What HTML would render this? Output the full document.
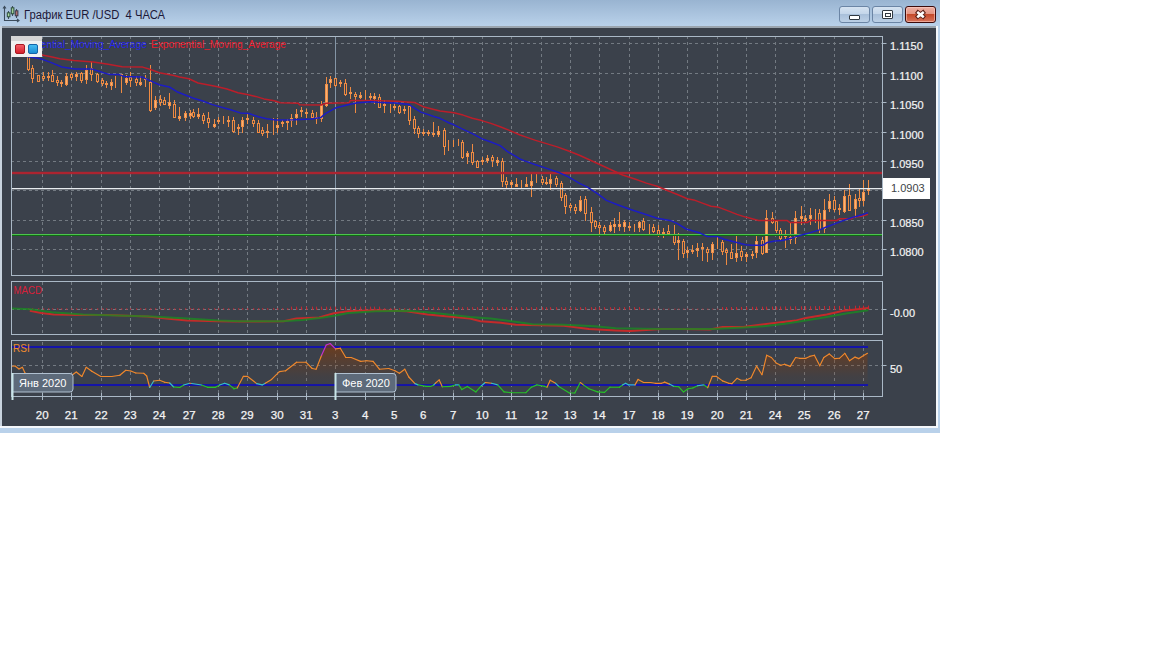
<!DOCTYPE html>
<html><head><meta charset="utf-8"><style>
html,body{margin:0;padding:0;background:#fff;width:1152px;height:648px;overflow:hidden;font-family:"Liberation Sans",sans-serif}
#win{position:absolute;left:0;top:0;width:940px;height:433px;background:#b9d1ea}
#tb{position:absolute;left:0;top:0;width:940px;height:26px;background:linear-gradient(#99b4d1,#b9d1ea)}
#dark{position:absolute;left:2px;top:26px;width:934px;height:400px;background:linear-gradient(#3b414b,#3b414b) 0 2px/100% 100% no-repeat,linear-gradient(#9aa4ae,#5a626a)}
#lb{position:absolute;left:0;top:26px;width:2px;height:402px;background:#c9d3de}
#bb{position:absolute;left:0;top:426px;width:938px;height:2px;background:#f4f7fb}
#rb{position:absolute;left:936px;top:26px;width:2px;height:402px;background:#f4f7fb}
#title{position:absolute;left:23.5px;top:8px;font-size:12.3px;color:#1c1838;white-space:pre;transform:scaleX(0.915);transform-origin:0 0}
.btn{position:absolute;top:6px;height:17px;border-radius:3px;box-sizing:border-box}
svg{position:absolute;left:0;top:0}
</style></head><body>
<div id="win"><div id="tb"></div><div id="lb"></div><div id="rb"></div><div id="bb"></div><div id="dark"></div>
<svg width="24" height="26" style="position:absolute;left:0;top:0" viewBox="0 0 24 26"><g stroke="#3c4c5c" fill="none" stroke-width="1.1"><path d="M4.5 7 V20.5 H18.5"/><path d="M3 8.5 L4.5 6.5 L6 8.5"/><path d="M17 19 L19 20.5 L17 22"/><path d="M8.5 11 V19 M12.5 6 V16 M16.5 9 V18"/></g><rect x="7.3" y="12.8" width="2.6" height="4" fill="#a8d8a0" stroke="#2c4c3c" stroke-width="1"/><rect x="11.3" y="7.8" width="2.6" height="6" fill="#a0d098" stroke="#2c4c3c" stroke-width="1"/><rect x="15.3" y="10.8" width="2.6" height="5" fill="#b07070" stroke="#3c3c4c" stroke-width="1"/></svg>
<div id="title">График EUR /USD  4 ЧАСА</div>
<div class="btn" style="left:839px;width:31px;border:1px solid #6b85a5;background:linear-gradient(#d6e3f1 0%,#c4d6ea 45%,#a9c0da 50%,#bcd0e6 100%)"><div style="position:absolute;left:9px;top:8px;width:9px;height:3px;border:1px solid #303840;background:#fff;border-radius:1px"></div></div>
<div class="btn" style="left:872px;width:31px;border:1px solid #6b85a5;background:linear-gradient(#d6e3f1 0%,#c4d6ea 45%,#a9c0da 50%,#bcd0e6 100%)"><div style="position:absolute;left:9px;top:3px;width:9px;height:7px;border:1px solid #303840;background:#fff;border-radius:1px"><div style="position:absolute;left:2px;top:2px;width:4px;height:2px;border:1px solid #303840"></div></div></div>
<div class="btn" style="left:905px;width:31px;border:1px solid #3c0a0a;background:linear-gradient(#eeb0a4 0%,#e49482 45%,#c4492a 50%,#d8745c 100%);box-shadow:inset 0 0 0 1px rgba(255,210,200,0.55)"><svg width="29" height="15" style="position:absolute;left:0;top:0" viewBox="0 0 29 15"><path d="M10.3 4.3 L18.7 10.9 M18.7 4.3 L10.3 10.9" stroke="#5a2018" stroke-width="4.3"/><path d="M11.2 5 L17.8 10.2 M17.8 5 L11.2 10.2" stroke="#ffffff" stroke-width="2.6"/></svg></div>
<svg width="1152" height="648" viewBox="0 0 1152 648" font-family="Liberation Sans, sans-serif">
<line x1="42.5" y1="37.0" x2="42.5" y2="275.5" stroke="#737a82" stroke-dasharray="3 3" stroke-dashoffset="1"/>
<line x1="42.5" y1="282.0" x2="42.5" y2="334.5" stroke="#737a82" stroke-dasharray="3 3" stroke-dashoffset="0"/>
<line x1="42.5" y1="341.0" x2="42.5" y2="396.5" stroke="#737a82" stroke-dasharray="3 3" stroke-dashoffset="5"/>
<line x1="71.5" y1="37.0" x2="71.5" y2="275.5" stroke="#737a82" stroke-dasharray="3 3" stroke-dashoffset="1"/>
<line x1="71.5" y1="282.0" x2="71.5" y2="334.5" stroke="#737a82" stroke-dasharray="3 3" stroke-dashoffset="0"/>
<line x1="71.5" y1="341.0" x2="71.5" y2="396.5" stroke="#737a82" stroke-dasharray="3 3" stroke-dashoffset="5"/>
<line x1="101.5" y1="37.0" x2="101.5" y2="275.5" stroke="#737a82" stroke-dasharray="3 3" stroke-dashoffset="1"/>
<line x1="101.5" y1="282.0" x2="101.5" y2="334.5" stroke="#737a82" stroke-dasharray="3 3" stroke-dashoffset="0"/>
<line x1="101.5" y1="341.0" x2="101.5" y2="396.5" stroke="#737a82" stroke-dasharray="3 3" stroke-dashoffset="5"/>
<line x1="130.5" y1="37.0" x2="130.5" y2="275.5" stroke="#737a82" stroke-dasharray="3 3" stroke-dashoffset="1"/>
<line x1="130.5" y1="282.0" x2="130.5" y2="334.5" stroke="#737a82" stroke-dasharray="3 3" stroke-dashoffset="0"/>
<line x1="130.5" y1="341.0" x2="130.5" y2="396.5" stroke="#737a82" stroke-dasharray="3 3" stroke-dashoffset="5"/>
<line x1="159.5" y1="37.0" x2="159.5" y2="275.5" stroke="#737a82" stroke-dasharray="3 3" stroke-dashoffset="1"/>
<line x1="159.5" y1="282.0" x2="159.5" y2="334.5" stroke="#737a82" stroke-dasharray="3 3" stroke-dashoffset="0"/>
<line x1="159.5" y1="341.0" x2="159.5" y2="396.5" stroke="#737a82" stroke-dasharray="3 3" stroke-dashoffset="5"/>
<line x1="189.5" y1="37.0" x2="189.5" y2="275.5" stroke="#737a82" stroke-dasharray="3 3" stroke-dashoffset="1"/>
<line x1="189.5" y1="282.0" x2="189.5" y2="334.5" stroke="#737a82" stroke-dasharray="3 3" stroke-dashoffset="0"/>
<line x1="189.5" y1="341.0" x2="189.5" y2="396.5" stroke="#737a82" stroke-dasharray="3 3" stroke-dashoffset="5"/>
<line x1="218.5" y1="37.0" x2="218.5" y2="275.5" stroke="#737a82" stroke-dasharray="3 3" stroke-dashoffset="1"/>
<line x1="218.5" y1="282.0" x2="218.5" y2="334.5" stroke="#737a82" stroke-dasharray="3 3" stroke-dashoffset="0"/>
<line x1="218.5" y1="341.0" x2="218.5" y2="396.5" stroke="#737a82" stroke-dasharray="3 3" stroke-dashoffset="5"/>
<line x1="247.5" y1="37.0" x2="247.5" y2="275.5" stroke="#737a82" stroke-dasharray="3 3" stroke-dashoffset="1"/>
<line x1="247.5" y1="282.0" x2="247.5" y2="334.5" stroke="#737a82" stroke-dasharray="3 3" stroke-dashoffset="0"/>
<line x1="247.5" y1="341.0" x2="247.5" y2="396.5" stroke="#737a82" stroke-dasharray="3 3" stroke-dashoffset="5"/>
<line x1="277.5" y1="37.0" x2="277.5" y2="275.5" stroke="#737a82" stroke-dasharray="3 3" stroke-dashoffset="1"/>
<line x1="277.5" y1="282.0" x2="277.5" y2="334.5" stroke="#737a82" stroke-dasharray="3 3" stroke-dashoffset="0"/>
<line x1="277.5" y1="341.0" x2="277.5" y2="396.5" stroke="#737a82" stroke-dasharray="3 3" stroke-dashoffset="5"/>
<line x1="306.5" y1="37.0" x2="306.5" y2="275.5" stroke="#737a82" stroke-dasharray="3 3" stroke-dashoffset="1"/>
<line x1="306.5" y1="282.0" x2="306.5" y2="334.5" stroke="#737a82" stroke-dasharray="3 3" stroke-dashoffset="0"/>
<line x1="306.5" y1="341.0" x2="306.5" y2="396.5" stroke="#737a82" stroke-dasharray="3 3" stroke-dashoffset="5"/>
<line x1="335.5" y1="37.0" x2="335.5" y2="275.5" stroke="#737a82" stroke-dasharray="3 3" stroke-dashoffset="1"/>
<line x1="335.5" y1="282.0" x2="335.5" y2="334.5" stroke="#737a82" stroke-dasharray="3 3" stroke-dashoffset="0"/>
<line x1="335.5" y1="341.0" x2="335.5" y2="396.5" stroke="#737a82" stroke-dasharray="3 3" stroke-dashoffset="5"/>
<line x1="365.5" y1="37.0" x2="365.5" y2="275.5" stroke="#737a82" stroke-dasharray="3 3" stroke-dashoffset="1"/>
<line x1="365.5" y1="282.0" x2="365.5" y2="334.5" stroke="#737a82" stroke-dasharray="3 3" stroke-dashoffset="0"/>
<line x1="365.5" y1="341.0" x2="365.5" y2="396.5" stroke="#737a82" stroke-dasharray="3 3" stroke-dashoffset="5"/>
<line x1="394.5" y1="37.0" x2="394.5" y2="275.5" stroke="#737a82" stroke-dasharray="3 3" stroke-dashoffset="1"/>
<line x1="394.5" y1="282.0" x2="394.5" y2="334.5" stroke="#737a82" stroke-dasharray="3 3" stroke-dashoffset="0"/>
<line x1="394.5" y1="341.0" x2="394.5" y2="396.5" stroke="#737a82" stroke-dasharray="3 3" stroke-dashoffset="5"/>
<line x1="423.5" y1="37.0" x2="423.5" y2="275.5" stroke="#737a82" stroke-dasharray="3 3" stroke-dashoffset="1"/>
<line x1="423.5" y1="282.0" x2="423.5" y2="334.5" stroke="#737a82" stroke-dasharray="3 3" stroke-dashoffset="0"/>
<line x1="423.5" y1="341.0" x2="423.5" y2="396.5" stroke="#737a82" stroke-dasharray="3 3" stroke-dashoffset="5"/>
<line x1="453.5" y1="37.0" x2="453.5" y2="275.5" stroke="#737a82" stroke-dasharray="3 3" stroke-dashoffset="1"/>
<line x1="453.5" y1="282.0" x2="453.5" y2="334.5" stroke="#737a82" stroke-dasharray="3 3" stroke-dashoffset="0"/>
<line x1="453.5" y1="341.0" x2="453.5" y2="396.5" stroke="#737a82" stroke-dasharray="3 3" stroke-dashoffset="5"/>
<line x1="482.5" y1="37.0" x2="482.5" y2="275.5" stroke="#737a82" stroke-dasharray="3 3" stroke-dashoffset="1"/>
<line x1="482.5" y1="282.0" x2="482.5" y2="334.5" stroke="#737a82" stroke-dasharray="3 3" stroke-dashoffset="0"/>
<line x1="482.5" y1="341.0" x2="482.5" y2="396.5" stroke="#737a82" stroke-dasharray="3 3" stroke-dashoffset="5"/>
<line x1="511.5" y1="37.0" x2="511.5" y2="275.5" stroke="#737a82" stroke-dasharray="3 3" stroke-dashoffset="1"/>
<line x1="511.5" y1="282.0" x2="511.5" y2="334.5" stroke="#737a82" stroke-dasharray="3 3" stroke-dashoffset="0"/>
<line x1="511.5" y1="341.0" x2="511.5" y2="396.5" stroke="#737a82" stroke-dasharray="3 3" stroke-dashoffset="5"/>
<line x1="541.5" y1="37.0" x2="541.5" y2="275.5" stroke="#737a82" stroke-dasharray="3 3" stroke-dashoffset="1"/>
<line x1="541.5" y1="282.0" x2="541.5" y2="334.5" stroke="#737a82" stroke-dasharray="3 3" stroke-dashoffset="0"/>
<line x1="541.5" y1="341.0" x2="541.5" y2="396.5" stroke="#737a82" stroke-dasharray="3 3" stroke-dashoffset="5"/>
<line x1="570.5" y1="37.0" x2="570.5" y2="275.5" stroke="#737a82" stroke-dasharray="3 3" stroke-dashoffset="1"/>
<line x1="570.5" y1="282.0" x2="570.5" y2="334.5" stroke="#737a82" stroke-dasharray="3 3" stroke-dashoffset="0"/>
<line x1="570.5" y1="341.0" x2="570.5" y2="396.5" stroke="#737a82" stroke-dasharray="3 3" stroke-dashoffset="5"/>
<line x1="599.5" y1="37.0" x2="599.5" y2="275.5" stroke="#737a82" stroke-dasharray="3 3" stroke-dashoffset="1"/>
<line x1="599.5" y1="282.0" x2="599.5" y2="334.5" stroke="#737a82" stroke-dasharray="3 3" stroke-dashoffset="0"/>
<line x1="599.5" y1="341.0" x2="599.5" y2="396.5" stroke="#737a82" stroke-dasharray="3 3" stroke-dashoffset="5"/>
<line x1="629.5" y1="37.0" x2="629.5" y2="275.5" stroke="#737a82" stroke-dasharray="3 3" stroke-dashoffset="1"/>
<line x1="629.5" y1="282.0" x2="629.5" y2="334.5" stroke="#737a82" stroke-dasharray="3 3" stroke-dashoffset="0"/>
<line x1="629.5" y1="341.0" x2="629.5" y2="396.5" stroke="#737a82" stroke-dasharray="3 3" stroke-dashoffset="5"/>
<line x1="658.5" y1="37.0" x2="658.5" y2="275.5" stroke="#737a82" stroke-dasharray="3 3" stroke-dashoffset="1"/>
<line x1="658.5" y1="282.0" x2="658.5" y2="334.5" stroke="#737a82" stroke-dasharray="3 3" stroke-dashoffset="0"/>
<line x1="658.5" y1="341.0" x2="658.5" y2="396.5" stroke="#737a82" stroke-dasharray="3 3" stroke-dashoffset="5"/>
<line x1="687.5" y1="37.0" x2="687.5" y2="275.5" stroke="#737a82" stroke-dasharray="3 3" stroke-dashoffset="1"/>
<line x1="687.5" y1="282.0" x2="687.5" y2="334.5" stroke="#737a82" stroke-dasharray="3 3" stroke-dashoffset="0"/>
<line x1="687.5" y1="341.0" x2="687.5" y2="396.5" stroke="#737a82" stroke-dasharray="3 3" stroke-dashoffset="5"/>
<line x1="717.5" y1="37.0" x2="717.5" y2="275.5" stroke="#737a82" stroke-dasharray="3 3" stroke-dashoffset="1"/>
<line x1="717.5" y1="282.0" x2="717.5" y2="334.5" stroke="#737a82" stroke-dasharray="3 3" stroke-dashoffset="0"/>
<line x1="717.5" y1="341.0" x2="717.5" y2="396.5" stroke="#737a82" stroke-dasharray="3 3" stroke-dashoffset="5"/>
<line x1="746.5" y1="37.0" x2="746.5" y2="275.5" stroke="#737a82" stroke-dasharray="3 3" stroke-dashoffset="1"/>
<line x1="746.5" y1="282.0" x2="746.5" y2="334.5" stroke="#737a82" stroke-dasharray="3 3" stroke-dashoffset="0"/>
<line x1="746.5" y1="341.0" x2="746.5" y2="396.5" stroke="#737a82" stroke-dasharray="3 3" stroke-dashoffset="5"/>
<line x1="775.5" y1="37.0" x2="775.5" y2="275.5" stroke="#737a82" stroke-dasharray="3 3" stroke-dashoffset="1"/>
<line x1="775.5" y1="282.0" x2="775.5" y2="334.5" stroke="#737a82" stroke-dasharray="3 3" stroke-dashoffset="0"/>
<line x1="775.5" y1="341.0" x2="775.5" y2="396.5" stroke="#737a82" stroke-dasharray="3 3" stroke-dashoffset="5"/>
<line x1="804.5" y1="37.0" x2="804.5" y2="275.5" stroke="#737a82" stroke-dasharray="3 3" stroke-dashoffset="1"/>
<line x1="804.5" y1="282.0" x2="804.5" y2="334.5" stroke="#737a82" stroke-dasharray="3 3" stroke-dashoffset="0"/>
<line x1="804.5" y1="341.0" x2="804.5" y2="396.5" stroke="#737a82" stroke-dasharray="3 3" stroke-dashoffset="5"/>
<line x1="834.5" y1="37.0" x2="834.5" y2="275.5" stroke="#737a82" stroke-dasharray="3 3" stroke-dashoffset="1"/>
<line x1="834.5" y1="282.0" x2="834.5" y2="334.5" stroke="#737a82" stroke-dasharray="3 3" stroke-dashoffset="0"/>
<line x1="834.5" y1="341.0" x2="834.5" y2="396.5" stroke="#737a82" stroke-dasharray="3 3" stroke-dashoffset="5"/>
<line x1="863.5" y1="37.0" x2="863.5" y2="275.5" stroke="#737a82" stroke-dasharray="3 3" stroke-dashoffset="1"/>
<line x1="863.5" y1="282.0" x2="863.5" y2="334.5" stroke="#737a82" stroke-dasharray="3 3" stroke-dashoffset="0"/>
<line x1="863.5" y1="341.0" x2="863.5" y2="396.5" stroke="#737a82" stroke-dasharray="3 3" stroke-dashoffset="5"/>
<line x1="12" y1="43.5" x2="882.5" y2="43.5" stroke="#737a82" stroke-dasharray="3 3" stroke-dashoffset="1"/>
<line x1="882.5" y1="43.5" x2="886.5" y2="43.5" stroke="#aab8c6"/>
<line x1="12" y1="73.5" x2="882.5" y2="73.5" stroke="#737a82" stroke-dasharray="3 3" stroke-dashoffset="1"/>
<line x1="882.5" y1="73.5" x2="886.5" y2="73.5" stroke="#aab8c6"/>
<line x1="12" y1="102.5" x2="882.5" y2="102.5" stroke="#737a82" stroke-dasharray="3 3" stroke-dashoffset="1"/>
<line x1="882.5" y1="102.5" x2="886.5" y2="102.5" stroke="#aab8c6"/>
<line x1="12" y1="132.5" x2="882.5" y2="132.5" stroke="#737a82" stroke-dasharray="3 3" stroke-dashoffset="1"/>
<line x1="882.5" y1="132.5" x2="886.5" y2="132.5" stroke="#aab8c6"/>
<line x1="12" y1="161.5" x2="882.5" y2="161.5" stroke="#737a82" stroke-dasharray="3 3" stroke-dashoffset="1"/>
<line x1="882.5" y1="161.5" x2="886.5" y2="161.5" stroke="#aab8c6"/>
<line x1="12" y1="190.5" x2="882.5" y2="190.5" stroke="#737a82" stroke-dasharray="3 3" stroke-dashoffset="1"/>
<line x1="882.5" y1="190.5" x2="886.5" y2="190.5" stroke="#aab8c6"/>
<line x1="12" y1="220.5" x2="882.5" y2="220.5" stroke="#737a82" stroke-dasharray="3 3" stroke-dashoffset="1"/>
<line x1="882.5" y1="220.5" x2="886.5" y2="220.5" stroke="#aab8c6"/>
<line x1="12" y1="249.5" x2="882.5" y2="249.5" stroke="#737a82" stroke-dasharray="3 3" stroke-dashoffset="1"/>
<line x1="882.5" y1="249.5" x2="886.5" y2="249.5" stroke="#aab8c6"/>
<line x1="12" y1="309.5" x2="882.5" y2="309.5" stroke="#737a82" stroke-dasharray="3 3" stroke-dashoffset="1"/>
<line x1="882.5" y1="309.5" x2="886.5" y2="309.5" stroke="#aab8c6"/>
<line x1="12" y1="365.5" x2="882.5" y2="365.5" stroke="#737a82" stroke-dasharray="3 3" stroke-dashoffset="1"/>
<line x1="882.5" y1="365.5" x2="886.5" y2="365.5" stroke="#aab8c6"/>
<line x1="335.5" y1="37" x2="335.5" y2="340" stroke="#8495a6"/>
<line x1="13.5" y1="40" x2="13.5" y2="53" stroke="#ee8a42"/>
<rect x="12.5" y="42.5" width="2" height="8" fill="#3b414b" stroke="#ee8a42"/>
<line x1="18.5" y1="38" x2="18.5" y2="51" stroke="#ee8a42"/>
<rect x="17.5" y="40.5" width="2" height="8" fill="#fab272" stroke="#f0904a"/>
<line x1="23.5" y1="40" x2="23.5" y2="56" stroke="#ee8a42"/>
<rect x="22.5" y="43.5" width="2" height="9" fill="#3b414b" stroke="#ee8a42"/>
<line x1="28.5" y1="40" x2="28.5" y2="71" stroke="#ee8a42"/>
<rect x="27.5" y="45.5" width="2" height="24" fill="#3b414b" stroke="#ee8a42"/>
<line x1="32.5" y1="65" x2="32.5" y2="83" stroke="#ee8a42"/>
<rect x="31.5" y="68.5" width="2" height="10" fill="#3b414b" stroke="#ee8a42"/>
<line x1="38.5" y1="75" x2="38.5" y2="82" stroke="#ee8a42"/>
<rect x="37.5" y="75.5" width="2" height="6" fill="#3b414b" stroke="#ee8a42"/>
<line x1="43.5" y1="72" x2="43.5" y2="81" stroke="#ee8a42"/>
<rect x="42.5" y="76.5" width="2" height="2" fill="#3b414b" stroke="#ee8a42"/>
<line x1="48.5" y1="72" x2="48.5" y2="81" stroke="#ee8a42"/>
<rect x="47.5" y="76.5" width="2" height="1" fill="#fab272" stroke="#f0904a"/>
<line x1="52.5" y1="70" x2="52.5" y2="82" stroke="#ee8a42"/>
<rect x="51.5" y="75.5" width="2" height="6" fill="#3b414b" stroke="#ee8a42"/>
<line x1="57.5" y1="76" x2="57.5" y2="86" stroke="#ee8a42"/>
<rect x="56.5" y="80.5" width="2" height="2" fill="#3b414b" stroke="#ee8a42"/>
<line x1="61.5" y1="80" x2="61.5" y2="87" stroke="#ee8a42"/>
<rect x="60.5" y="82.5" width="2" height="1" fill="#fab272" stroke="#f0904a"/>
<line x1="66.5" y1="73" x2="66.5" y2="86" stroke="#ee8a42"/>
<rect x="65.5" y="76.5" width="2" height="8" fill="#fab272" stroke="#f0904a"/>
<line x1="71.5" y1="73" x2="71.5" y2="80" stroke="#ee8a42"/>
<rect x="70.5" y="74.5" width="2" height="3" fill="#3b414b" stroke="#ee8a42"/>
<line x1="76.5" y1="72" x2="76.5" y2="81" stroke="#ee8a42"/>
<rect x="75.5" y="74.5" width="2" height="2" fill="#fab272" stroke="#f0904a"/>
<line x1="81.5" y1="72" x2="81.5" y2="83" stroke="#ee8a42"/>
<rect x="80.5" y="73.5" width="2" height="7" fill="#3b414b" stroke="#ee8a42"/>
<line x1="86.5" y1="65" x2="86.5" y2="84" stroke="#ee8a42"/>
<rect x="85.5" y="70.5" width="2" height="9" fill="#fab272" stroke="#f0904a"/>
<line x1="91.5" y1="62" x2="91.5" y2="81" stroke="#ee8a42"/>
<rect x="90.5" y="68.5" width="2" height="6" fill="#3b414b" stroke="#ee8a42"/>
<line x1="97.5" y1="73" x2="97.5" y2="83" stroke="#ee8a42"/>
<rect x="96.5" y="74.5" width="2" height="7" fill="#3b414b" stroke="#ee8a42"/>
<line x1="102.5" y1="78" x2="102.5" y2="86" stroke="#ee8a42"/>
<rect x="101.5" y="80.5" width="2" height="3" fill="#3b414b" stroke="#ee8a42"/>
<line x1="106.5" y1="81" x2="106.5" y2="88" stroke="#ee8a42"/>
<rect x="105.5" y="83.5" width="2" height="1" fill="#fab272" stroke="#f0904a"/>
<line x1="111.5" y1="79" x2="111.5" y2="90" stroke="#ee8a42"/>
<rect x="110.5" y="82.5" width="2" height="3" fill="#fab272" stroke="#f0904a"/>
<line x1="115.5" y1="76" x2="115.5" y2="88" stroke="#ee8a42"/>
<line x1="121.5" y1="74" x2="121.5" y2="93" stroke="#ee8a42"/>
<rect x="120.5" y="74.5" width="2" height="1" fill="#fab272" stroke="#f0904a"/>
<line x1="126.5" y1="75" x2="126.5" y2="85" stroke="#ee8a42"/>
<rect x="125.5" y="78.5" width="2" height="4" fill="#fab272" stroke="#f0904a"/>
<line x1="130.5" y1="72" x2="130.5" y2="87" stroke="#ee8a42"/>
<rect x="129.5" y="77.5" width="2" height="3" fill="#3b414b" stroke="#ee8a42"/>
<line x1="136.5" y1="76" x2="136.5" y2="86" stroke="#ee8a42"/>
<rect x="135.5" y="79.5" width="2" height="3" fill="#3b414b" stroke="#ee8a42"/>
<line x1="140.5" y1="76" x2="140.5" y2="86" stroke="#ee8a42"/>
<rect x="139.5" y="82.5" width="2" height="2" fill="#fab272" stroke="#f0904a"/>
<line x1="145.5" y1="75" x2="145.5" y2="87" stroke="#ee8a42"/>
<rect x="144.5" y="78.5" width="2" height="1" fill="#fab272" stroke="#f0904a"/>
<line x1="150.5" y1="65" x2="150.5" y2="112" stroke="#ee8a42"/>
<rect x="149.5" y="82.5" width="2" height="28" fill="#3b414b" stroke="#ee8a42"/>
<line x1="155.5" y1="96" x2="155.5" y2="110" stroke="#ee8a42"/>
<rect x="154.5" y="100.5" width="2" height="7" fill="#fab272" stroke="#f0904a"/>
<line x1="160.5" y1="95" x2="160.5" y2="106" stroke="#ee8a42"/>
<rect x="159.5" y="99.5" width="2" height="3" fill="#3b414b" stroke="#ee8a42"/>
<line x1="164.5" y1="97" x2="164.5" y2="105" stroke="#ee8a42"/>
<rect x="163.5" y="100.5" width="2" height="4" fill="#3b414b" stroke="#ee8a42"/>
<line x1="169.5" y1="93" x2="169.5" y2="109" stroke="#ee8a42"/>
<rect x="168.5" y="102.5" width="2" height="3" fill="#fab272" stroke="#f0904a"/>
<line x1="174.5" y1="100" x2="174.5" y2="118" stroke="#ee8a42"/>
<rect x="173.5" y="104.5" width="2" height="13" fill="#3b414b" stroke="#ee8a42"/>
<line x1="179.5" y1="107" x2="179.5" y2="121" stroke="#ee8a42"/>
<rect x="178.5" y="116.5" width="2" height="2" fill="#fab272" stroke="#f0904a"/>
<line x1="185.5" y1="111" x2="185.5" y2="121" stroke="#ee8a42"/>
<rect x="184.5" y="113.5" width="2" height="4" fill="#fab272" stroke="#f0904a"/>
<line x1="190.5" y1="110" x2="190.5" y2="119" stroke="#ee8a42"/>
<rect x="189.5" y="113.5" width="2" height="2" fill="#fab272" stroke="#f0904a"/>
<line x1="193.5" y1="109" x2="193.5" y2="118" stroke="#ee8a42"/>
<rect x="192.5" y="112.5" width="2" height="4" fill="#3b414b" stroke="#ee8a42"/>
<line x1="198.5" y1="108" x2="198.5" y2="119" stroke="#ee8a42"/>
<rect x="197.5" y="114.5" width="2" height="2" fill="#fab272" stroke="#f0904a"/>
<line x1="203.5" y1="113" x2="203.5" y2="124" stroke="#ee8a42"/>
<rect x="202.5" y="115.5" width="2" height="5" fill="#3b414b" stroke="#ee8a42"/>
<line x1="208.5" y1="112" x2="208.5" y2="128" stroke="#ee8a42"/>
<rect x="207.5" y="118.5" width="2" height="4" fill="#3b414b" stroke="#ee8a42"/>
<line x1="214.5" y1="119" x2="214.5" y2="128" stroke="#ee8a42"/>
<rect x="213.5" y="124.5" width="2" height="2" fill="#fab272" stroke="#f0904a"/>
<line x1="218.5" y1="117" x2="218.5" y2="124" stroke="#ee8a42"/>
<rect x="217.5" y="120.5" width="2" height="1" fill="#fab272" stroke="#f0904a"/>
<line x1="223.5" y1="116" x2="223.5" y2="124" stroke="#ee8a42"/>
<line x1="228.5" y1="116" x2="228.5" y2="127" stroke="#ee8a42"/>
<rect x="227.5" y="120.5" width="2" height="1" fill="#fab272" stroke="#f0904a"/>
<line x1="233.5" y1="117" x2="233.5" y2="133" stroke="#ee8a42"/>
<rect x="232.5" y="120.5" width="2" height="11" fill="#3b414b" stroke="#ee8a42"/>
<line x1="238.5" y1="124" x2="238.5" y2="135" stroke="#ee8a42"/>
<rect x="237.5" y="127.5" width="2" height="1" fill="#fab272" stroke="#f0904a"/>
<line x1="242.5" y1="117" x2="242.5" y2="133" stroke="#ee8a42"/>
<rect x="241.5" y="120.5" width="2" height="6" fill="#fab272" stroke="#f0904a"/>
<line x1="247.5" y1="114" x2="247.5" y2="124" stroke="#ee8a42"/>
<rect x="246.5" y="118.5" width="2" height="1" fill="#fab272" stroke="#f0904a"/>
<line x1="253.5" y1="117" x2="253.5" y2="127" stroke="#ee8a42"/>
<rect x="252.5" y="120.5" width="2" height="3" fill="#3b414b" stroke="#ee8a42"/>
<line x1="258.5" y1="120" x2="258.5" y2="133" stroke="#ee8a42"/>
<rect x="257.5" y="123.5" width="2" height="9" fill="#3b414b" stroke="#ee8a42"/>
<line x1="262.5" y1="127" x2="262.5" y2="136" stroke="#ee8a42"/>
<rect x="261.5" y="130.5" width="2" height="3" fill="#3b414b" stroke="#ee8a42"/>
<line x1="267.5" y1="124" x2="267.5" y2="138" stroke="#ee8a42"/>
<rect x="266.5" y="131.5" width="2" height="1" fill="#fab272" stroke="#f0904a"/>
<line x1="273.5" y1="118" x2="273.5" y2="135" stroke="#ee8a42"/>
<line x1="277.5" y1="118" x2="277.5" y2="133" stroke="#ee8a42"/>
<rect x="276.5" y="125.5" width="2" height="2" fill="#fab272" stroke="#f0904a"/>
<line x1="282.5" y1="120" x2="282.5" y2="127" stroke="#ee8a42"/>
<rect x="281.5" y="122.5" width="2" height="1" fill="#fab272" stroke="#f0904a"/>
<line x1="287.5" y1="119" x2="287.5" y2="130" stroke="#ee8a42"/>
<rect x="286.5" y="121.5" width="2" height="1" fill="#fab272" stroke="#f0904a"/>
<line x1="291.5" y1="114" x2="291.5" y2="127" stroke="#ee8a42"/>
<rect x="290.5" y="118.5" width="2" height="2" fill="#fab272" stroke="#f0904a"/>
<line x1="296.5" y1="109" x2="296.5" y2="125" stroke="#ee8a42"/>
<rect x="295.5" y="114.5" width="2" height="3" fill="#fab272" stroke="#f0904a"/>
<line x1="301.5" y1="107" x2="301.5" y2="117" stroke="#ee8a42"/>
<rect x="300.5" y="110.5" width="2" height="1" fill="#fab272" stroke="#f0904a"/>
<line x1="306.5" y1="109" x2="306.5" y2="118" stroke="#ee8a42"/>
<rect x="305.5" y="112.5" width="2" height="1" fill="#fab272" stroke="#f0904a"/>
<line x1="312.5" y1="110" x2="312.5" y2="119" stroke="#ee8a42"/>
<rect x="311.5" y="113.5" width="2" height="4" fill="#3b414b" stroke="#ee8a42"/>
<line x1="316.5" y1="112" x2="316.5" y2="124" stroke="#ee8a42"/>
<rect x="315.5" y="117.5" width="2" height="1" fill="#fab272" stroke="#f0904a"/>
<line x1="321.5" y1="101" x2="321.5" y2="122" stroke="#ee8a42"/>
<rect x="320.5" y="105.5" width="2" height="13" fill="#fab272" stroke="#f0904a"/>
<line x1="326.5" y1="77" x2="326.5" y2="107" stroke="#ee8a42"/>
<rect x="325.5" y="84.5" width="2" height="21" fill="#fab272" stroke="#f0904a"/>
<line x1="330.5" y1="76" x2="330.5" y2="88" stroke="#ee8a42"/>
<rect x="329.5" y="79.5" width="2" height="3" fill="#fab272" stroke="#f0904a"/>
<line x1="335.5" y1="78" x2="335.5" y2="87" stroke="#ee8a42"/>
<rect x="334.5" y="78.5" width="2" height="7" fill="#3b414b" stroke="#ee8a42"/>
<line x1="340.5" y1="80" x2="340.5" y2="87" stroke="#ee8a42"/>
<rect x="339.5" y="82.5" width="2" height="1" fill="#fab272" stroke="#f0904a"/>
<line x1="345.5" y1="79" x2="345.5" y2="96" stroke="#ee8a42"/>
<rect x="344.5" y="83.5" width="2" height="11" fill="#3b414b" stroke="#ee8a42"/>
<line x1="350.5" y1="87" x2="350.5" y2="99" stroke="#ee8a42"/>
<rect x="349.5" y="92.5" width="2" height="1" fill="#fab272" stroke="#f0904a"/>
<line x1="355.5" y1="92" x2="355.5" y2="113" stroke="#ee8a42"/>
<rect x="354.5" y="94.5" width="2" height="2" fill="#3b414b" stroke="#ee8a42"/>
<line x1="360.5" y1="92" x2="360.5" y2="99" stroke="#ee8a42"/>
<rect x="359.5" y="95.5" width="2" height="2" fill="#fab272" stroke="#f0904a"/>
<line x1="365.5" y1="90" x2="365.5" y2="100" stroke="#ee8a42"/>
<line x1="370.5" y1="93" x2="370.5" y2="101" stroke="#ee8a42"/>
<rect x="369.5" y="96.5" width="2" height="1" fill="#fab272" stroke="#f0904a"/>
<line x1="374.5" y1="93" x2="374.5" y2="104" stroke="#ee8a42"/>
<rect x="373.5" y="96.5" width="2" height="2" fill="#fab272" stroke="#f0904a"/>
<line x1="379.5" y1="94" x2="379.5" y2="108" stroke="#ee8a42"/>
<rect x="378.5" y="97.5" width="2" height="10" fill="#3b414b" stroke="#ee8a42"/>
<line x1="384.5" y1="100" x2="384.5" y2="113" stroke="#ee8a42"/>
<rect x="383.5" y="104.5" width="2" height="1" fill="#fab272" stroke="#f0904a"/>
<line x1="390.5" y1="104" x2="390.5" y2="113" stroke="#ee8a42"/>
<line x1="394.5" y1="104" x2="394.5" y2="110" stroke="#ee8a42"/>
<rect x="393.5" y="106.5" width="2" height="1" fill="#fab272" stroke="#f0904a"/>
<line x1="399.5" y1="105" x2="399.5" y2="114" stroke="#ee8a42"/>
<rect x="398.5" y="106.5" width="2" height="6" fill="#3b414b" stroke="#ee8a42"/>
<line x1="404.5" y1="106" x2="404.5" y2="114" stroke="#ee8a42"/>
<rect x="403.5" y="109.5" width="2" height="1" fill="#fab272" stroke="#f0904a"/>
<line x1="409.5" y1="106" x2="409.5" y2="125" stroke="#ee8a42"/>
<rect x="408.5" y="106.5" width="2" height="14" fill="#3b414b" stroke="#ee8a42"/>
<line x1="414.5" y1="116" x2="414.5" y2="134" stroke="#ee8a42"/>
<rect x="413.5" y="119.5" width="2" height="9" fill="#3b414b" stroke="#ee8a42"/>
<line x1="418.5" y1="126" x2="418.5" y2="138" stroke="#ee8a42"/>
<rect x="417.5" y="128.5" width="2" height="5" fill="#3b414b" stroke="#ee8a42"/>
<line x1="423.5" y1="129" x2="423.5" y2="136" stroke="#ee8a42"/>
<rect x="422.5" y="132.5" width="2" height="1" fill="#fab272" stroke="#f0904a"/>
<line x1="428.5" y1="130" x2="428.5" y2="136" stroke="#ee8a42"/>
<rect x="427.5" y="132.5" width="2" height="1" fill="#fab272" stroke="#f0904a"/>
<line x1="433.5" y1="122" x2="433.5" y2="137" stroke="#ee8a42"/>
<rect x="432.5" y="133.5" width="2" height="1" fill="#fab272" stroke="#f0904a"/>
<line x1="438.5" y1="126" x2="438.5" y2="137" stroke="#ee8a42"/>
<rect x="437.5" y="131.5" width="2" height="3" fill="#fab272" stroke="#f0904a"/>
<line x1="444.5" y1="128" x2="444.5" y2="155" stroke="#ee8a42"/>
<rect x="443.5" y="130.5" width="2" height="16" fill="#3b414b" stroke="#ee8a42"/>
<line x1="448.5" y1="140" x2="448.5" y2="151" stroke="#ee8a42"/>
<line x1="453.5" y1="140" x2="453.5" y2="147" stroke="#ee8a42"/>
<line x1="458.5" y1="139" x2="458.5" y2="146" stroke="#ee8a42"/>
<line x1="462.5" y1="140" x2="462.5" y2="159" stroke="#ee8a42"/>
<rect x="461.5" y="142.5" width="2" height="15" fill="#3b414b" stroke="#ee8a42"/>
<line x1="467.5" y1="151" x2="467.5" y2="164" stroke="#ee8a42"/>
<rect x="466.5" y="153.5" width="2" height="3" fill="#fab272" stroke="#f0904a"/>
<line x1="472.5" y1="144" x2="472.5" y2="165" stroke="#ee8a42"/>
<rect x="471.5" y="152.5" width="2" height="10" fill="#3b414b" stroke="#ee8a42"/>
<line x1="477.5" y1="160" x2="477.5" y2="168" stroke="#ee8a42"/>
<rect x="476.5" y="161.5" width="2" height="6" fill="#3b414b" stroke="#ee8a42"/>
<line x1="482.5" y1="157" x2="482.5" y2="165" stroke="#ee8a42"/>
<rect x="481.5" y="160.5" width="2" height="1" fill="#fab272" stroke="#f0904a"/>
<line x1="487.5" y1="155" x2="487.5" y2="163" stroke="#ee8a42"/>
<rect x="486.5" y="158.5" width="2" height="2" fill="#fab272" stroke="#f0904a"/>
<line x1="492.5" y1="155" x2="492.5" y2="167" stroke="#ee8a42"/>
<rect x="491.5" y="157.5" width="2" height="3" fill="#3b414b" stroke="#ee8a42"/>
<line x1="497.5" y1="157" x2="497.5" y2="166" stroke="#ee8a42"/>
<rect x="496.5" y="160.5" width="2" height="2" fill="#fab272" stroke="#f0904a"/>
<line x1="502.5" y1="158" x2="502.5" y2="187" stroke="#ee8a42"/>
<rect x="501.5" y="161.5" width="2" height="20" fill="#3b414b" stroke="#ee8a42"/>
<line x1="506.5" y1="177" x2="506.5" y2="188" stroke="#ee8a42"/>
<rect x="505.5" y="181.5" width="2" height="3" fill="#3b414b" stroke="#ee8a42"/>
<line x1="511.5" y1="180" x2="511.5" y2="188" stroke="#ee8a42"/>
<rect x="510.5" y="182.5" width="2" height="2" fill="#fab272" stroke="#f0904a"/>
<line x1="516.5" y1="178" x2="516.5" y2="187" stroke="#ee8a42"/>
<rect x="515.5" y="184.5" width="2" height="2" fill="#fab272" stroke="#f0904a"/>
<line x1="521.5" y1="180" x2="521.5" y2="189" stroke="#ee8a42"/>
<line x1="526.5" y1="177" x2="526.5" y2="187" stroke="#ee8a42"/>
<rect x="525.5" y="184.5" width="2" height="2" fill="#fab272" stroke="#f0904a"/>
<line x1="531.5" y1="174" x2="531.5" y2="197" stroke="#ee8a42"/>
<rect x="530.5" y="181.5" width="2" height="4" fill="#fab272" stroke="#f0904a"/>
<line x1="536.5" y1="174" x2="536.5" y2="183" stroke="#ee8a42"/>
<line x1="542.5" y1="176" x2="542.5" y2="185" stroke="#ee8a42"/>
<rect x="541.5" y="179.5" width="2" height="3" fill="#3b414b" stroke="#ee8a42"/>
<line x1="546.5" y1="177" x2="546.5" y2="185" stroke="#ee8a42"/>
<rect x="545.5" y="182.5" width="2" height="1" fill="#fab272" stroke="#f0904a"/>
<line x1="550.5" y1="174" x2="550.5" y2="190" stroke="#ee8a42"/>
<rect x="549.5" y="179.5" width="2" height="4" fill="#fab272" stroke="#f0904a"/>
<line x1="556.5" y1="176" x2="556.5" y2="187" stroke="#ee8a42"/>
<rect x="555.5" y="178.5" width="2" height="6" fill="#3b414b" stroke="#ee8a42"/>
<line x1="561.5" y1="181" x2="561.5" y2="201" stroke="#ee8a42"/>
<rect x="560.5" y="183.5" width="2" height="14" fill="#3b414b" stroke="#ee8a42"/>
<line x1="565.5" y1="193" x2="565.5" y2="214" stroke="#ee8a42"/>
<rect x="564.5" y="195.5" width="2" height="11" fill="#3b414b" stroke="#ee8a42"/>
<line x1="570.5" y1="203" x2="570.5" y2="211" stroke="#ee8a42"/>
<rect x="569.5" y="205.5" width="2" height="2" fill="#3b414b" stroke="#ee8a42"/>
<line x1="575.5" y1="204" x2="575.5" y2="214" stroke="#ee8a42"/>
<rect x="574.5" y="207.5" width="2" height="3" fill="#3b414b" stroke="#ee8a42"/>
<line x1="580.5" y1="196" x2="580.5" y2="212" stroke="#ee8a42"/>
<rect x="579.5" y="200.5" width="2" height="10" fill="#fab272" stroke="#f0904a"/>
<line x1="585.5" y1="196" x2="585.5" y2="221" stroke="#ee8a42"/>
<rect x="584.5" y="199.5" width="2" height="14" fill="#3b414b" stroke="#ee8a42"/>
<line x1="591.5" y1="207" x2="591.5" y2="232" stroke="#ee8a42"/>
<rect x="590.5" y="212.5" width="2" height="10" fill="#3b414b" stroke="#ee8a42"/>
<line x1="595.5" y1="220" x2="595.5" y2="229" stroke="#ee8a42"/>
<rect x="594.5" y="221.5" width="2" height="5" fill="#3b414b" stroke="#ee8a42"/>
<line x1="599.5" y1="222" x2="599.5" y2="235" stroke="#ee8a42"/>
<rect x="598.5" y="225.5" width="2" height="2" fill="#3b414b" stroke="#ee8a42"/>
<line x1="604.5" y1="225" x2="604.5" y2="234" stroke="#ee8a42"/>
<rect x="603.5" y="227.5" width="2" height="4" fill="#3b414b" stroke="#ee8a42"/>
<line x1="610.5" y1="222" x2="610.5" y2="232" stroke="#ee8a42"/>
<rect x="609.5" y="225.5" width="2" height="5" fill="#fab272" stroke="#f0904a"/>
<line x1="614.5" y1="218" x2="614.5" y2="233" stroke="#ee8a42"/>
<rect x="613.5" y="224.5" width="2" height="2" fill="#fab272" stroke="#f0904a"/>
<line x1="619.5" y1="212" x2="619.5" y2="231" stroke="#ee8a42"/>
<rect x="618.5" y="224.5" width="2" height="2" fill="#fab272" stroke="#f0904a"/>
<line x1="624.5" y1="220" x2="624.5" y2="232" stroke="#ee8a42"/>
<rect x="623.5" y="222.5" width="2" height="4" fill="#fab272" stroke="#f0904a"/>
<line x1="629.5" y1="222" x2="629.5" y2="231" stroke="#ee8a42"/>
<rect x="628.5" y="226.5" width="2" height="1" fill="#fab272" stroke="#f0904a"/>
<line x1="634.5" y1="224" x2="634.5" y2="232" stroke="#ee8a42"/>
<line x1="639.5" y1="221" x2="639.5" y2="232" stroke="#ee8a42"/>
<rect x="638.5" y="222.5" width="2" height="5" fill="#fab272" stroke="#f0904a"/>
<line x1="643.5" y1="218" x2="643.5" y2="231" stroke="#ee8a42"/>
<rect x="642.5" y="221.5" width="2" height="8" fill="#3b414b" stroke="#ee8a42"/>
<line x1="649.5" y1="224" x2="649.5" y2="235" stroke="#ee8a42"/>
<line x1="653.5" y1="224" x2="653.5" y2="233" stroke="#ee8a42"/>
<rect x="652.5" y="227.5" width="2" height="4" fill="#3b414b" stroke="#ee8a42"/>
<line x1="658.5" y1="225" x2="658.5" y2="237" stroke="#ee8a42"/>
<rect x="657.5" y="230.5" width="2" height="4" fill="#3b414b" stroke="#ee8a42"/>
<line x1="663.5" y1="228" x2="663.5" y2="238" stroke="#ee8a42"/>
<rect x="662.5" y="232.5" width="2" height="1" fill="#fab272" stroke="#f0904a"/>
<line x1="668.5" y1="225" x2="668.5" y2="236" stroke="#ee8a42"/>
<rect x="667.5" y="231.5" width="2" height="2" fill="#3b414b" stroke="#ee8a42"/>
<line x1="674.5" y1="225" x2="674.5" y2="245" stroke="#ee8a42"/>
<rect x="673.5" y="234.5" width="2" height="8" fill="#3b414b" stroke="#ee8a42"/>
<line x1="678.5" y1="233" x2="678.5" y2="260" stroke="#ee8a42"/>
<rect x="677.5" y="240.5" width="2" height="2" fill="#fab272" stroke="#f0904a"/>
<line x1="683.5" y1="239" x2="683.5" y2="258" stroke="#ee8a42"/>
<rect x="682.5" y="241.5" width="2" height="12" fill="#3b414b" stroke="#ee8a42"/>
<line x1="687.5" y1="247" x2="687.5" y2="258" stroke="#ee8a42"/>
<rect x="686.5" y="250.5" width="2" height="2" fill="#fab272" stroke="#f0904a"/>
<line x1="692.5" y1="245" x2="692.5" y2="254" stroke="#ee8a42"/>
<rect x="691.5" y="250.5" width="2" height="1" fill="#fab272" stroke="#f0904a"/>
<line x1="697.5" y1="243" x2="697.5" y2="257" stroke="#ee8a42"/>
<rect x="696.5" y="248.5" width="2" height="2" fill="#fab272" stroke="#f0904a"/>
<line x1="702.5" y1="243" x2="702.5" y2="261" stroke="#ee8a42"/>
<rect x="701.5" y="247.5" width="2" height="1" fill="#fab272" stroke="#f0904a"/>
<line x1="707.5" y1="247" x2="707.5" y2="262" stroke="#ee8a42"/>
<rect x="706.5" y="249.5" width="2" height="3" fill="#3b414b" stroke="#ee8a42"/>
<line x1="712.5" y1="242" x2="712.5" y2="260" stroke="#ee8a42"/>
<rect x="711.5" y="244.5" width="2" height="8" fill="#fab272" stroke="#f0904a"/>
<line x1="717.5" y1="237" x2="717.5" y2="249" stroke="#ee8a42"/>
<line x1="722.5" y1="240" x2="722.5" y2="255" stroke="#ee8a42"/>
<rect x="721.5" y="242.5" width="2" height="9" fill="#3b414b" stroke="#ee8a42"/>
<line x1="726.5" y1="248" x2="726.5" y2="265" stroke="#ee8a42"/>
<rect x="725.5" y="250.5" width="2" height="2" fill="#3b414b" stroke="#ee8a42"/>
<line x1="731.5" y1="244" x2="731.5" y2="259" stroke="#ee8a42"/>
<rect x="730.5" y="252.5" width="2" height="6" fill="#3b414b" stroke="#ee8a42"/>
<line x1="736.5" y1="235" x2="736.5" y2="262" stroke="#ee8a42"/>
<rect x="735.5" y="253.5" width="2" height="4" fill="#fab272" stroke="#f0904a"/>
<line x1="741.5" y1="246" x2="741.5" y2="261" stroke="#ee8a42"/>
<rect x="740.5" y="251.5" width="2" height="5" fill="#3b414b" stroke="#ee8a42"/>
<line x1="746.5" y1="252" x2="746.5" y2="262" stroke="#ee8a42"/>
<rect x="745.5" y="254.5" width="2" height="2" fill="#fab272" stroke="#f0904a"/>
<line x1="752.5" y1="251" x2="752.5" y2="259" stroke="#ee8a42"/>
<rect x="751.5" y="254.5" width="2" height="1" fill="#fab272" stroke="#f0904a"/>
<line x1="756.5" y1="235" x2="756.5" y2="258" stroke="#ee8a42"/>
<rect x="755.5" y="241.5" width="2" height="11" fill="#fab272" stroke="#f0904a"/>
<line x1="762.5" y1="237" x2="762.5" y2="255" stroke="#ee8a42"/>
<rect x="761.5" y="240.5" width="2" height="13" fill="#3b414b" stroke="#ee8a42"/>
<line x1="766.5" y1="210" x2="766.5" y2="253" stroke="#ee8a42"/>
<rect x="765.5" y="218.5" width="2" height="34" fill="#fab272" stroke="#f0904a"/>
<line x1="772.5" y1="212" x2="772.5" y2="224" stroke="#ee8a42"/>
<rect x="771.5" y="218.5" width="2" height="4" fill="#3b414b" stroke="#ee8a42"/>
<line x1="776.5" y1="220" x2="776.5" y2="233" stroke="#ee8a42"/>
<rect x="775.5" y="221.5" width="2" height="9" fill="#3b414b" stroke="#ee8a42"/>
<line x1="780.5" y1="228" x2="780.5" y2="240" stroke="#ee8a42"/>
<rect x="779.5" y="230.5" width="2" height="8" fill="#3b414b" stroke="#ee8a42"/>
<line x1="785.5" y1="230" x2="785.5" y2="248" stroke="#ee8a42"/>
<rect x="784.5" y="234.5" width="2" height="2" fill="#fab272" stroke="#f0904a"/>
<line x1="790.5" y1="222" x2="790.5" y2="244" stroke="#ee8a42"/>
<rect x="789.5" y="237.5" width="2" height="2" fill="#3b414b" stroke="#ee8a42"/>
<line x1="795.5" y1="211" x2="795.5" y2="244" stroke="#ee8a42"/>
<rect x="794.5" y="218.5" width="2" height="19" fill="#fab272" stroke="#f0904a"/>
<line x1="801.5" y1="206" x2="801.5" y2="225" stroke="#ee8a42"/>
<rect x="800.5" y="216.5" width="2" height="2" fill="#fab272" stroke="#f0904a"/>
<line x1="805.5" y1="215" x2="805.5" y2="223" stroke="#ee8a42"/>
<rect x="804.5" y="218.5" width="2" height="2" fill="#fab272" stroke="#f0904a"/>
<line x1="810.5" y1="208" x2="810.5" y2="225" stroke="#ee8a42"/>
<rect x="809.5" y="215.5" width="2" height="3" fill="#fab272" stroke="#f0904a"/>
<line x1="815.5" y1="209" x2="815.5" y2="223" stroke="#ee8a42"/>
<line x1="819.5" y1="209" x2="819.5" y2="233" stroke="#ee8a42"/>
<rect x="818.5" y="213.5" width="2" height="16" fill="#3b414b" stroke="#ee8a42"/>
<line x1="824.5" y1="199" x2="824.5" y2="233" stroke="#ee8a42"/>
<rect x="823.5" y="210.5" width="2" height="18" fill="#fab272" stroke="#f0904a"/>
<line x1="829.5" y1="194" x2="829.5" y2="212" stroke="#ee8a42"/>
<rect x="828.5" y="201.5" width="2" height="7" fill="#fab272" stroke="#f0904a"/>
<line x1="834.5" y1="196" x2="834.5" y2="212" stroke="#ee8a42"/>
<rect x="833.5" y="200.5" width="2" height="9" fill="#3b414b" stroke="#ee8a42"/>
<line x1="839.5" y1="204" x2="839.5" y2="215" stroke="#ee8a42"/>
<rect x="838.5" y="208.5" width="2" height="1" fill="#fab272" stroke="#f0904a"/>
<line x1="844.5" y1="190" x2="844.5" y2="213" stroke="#ee8a42"/>
<rect x="843.5" y="196.5" width="2" height="15" fill="#fab272" stroke="#f0904a"/>
<line x1="849.5" y1="184" x2="849.5" y2="211" stroke="#ee8a42"/>
<rect x="848.5" y="195.5" width="2" height="15" fill="#3b414b" stroke="#ee8a42"/>
<line x1="855.5" y1="194" x2="855.5" y2="218" stroke="#ee8a42"/>
<rect x="854.5" y="199.5" width="2" height="9" fill="#fab272" stroke="#f0904a"/>
<line x1="859.5" y1="189" x2="859.5" y2="207" stroke="#ee8a42"/>
<rect x="858.5" y="198.5" width="2" height="2" fill="#3b414b" stroke="#ee8a42"/>
<line x1="863.5" y1="180" x2="863.5" y2="206" stroke="#ee8a42"/>
<rect x="862.5" y="192.5" width="2" height="8" fill="#fab272" stroke="#f0904a"/>
<line x1="868.5" y1="180" x2="868.5" y2="195" stroke="#ee8a42"/>
<rect x="867.5" y="188.5" width="2" height="2" fill="#fab272" stroke="#f0904a"/>
<rect x="12" y="171.8" width="870" height="2.4" fill="#ac2430"/>
<rect x="12" y="188" width="870" height="1.3" fill="#e6eaee"/>
<rect x="12" y="234" width="870" height="1" fill="#4ec24e"/>
<rect x="12" y="235" width="870" height="1" fill="#0e6a12"/>
<polyline points="12.0,52.0 41.9,55.0 49.8,56.4 60.0,58.7 73.9,60.5 93.3,61.9 108.2,64.3 122.2,66.7 142.6,67.1 149.0,69.0 159.3,72.7 174.0,75.5 179.6,76.9 188.9,78.8 198.1,83.0 207.4,84.8 217.6,86.7 226.9,89.0 238.0,92.7 247.2,94.5 255.6,96.4 263.9,98.9 274.2,100.8 280.4,102.8 298.4,103.3 299.4,104.7 321.0,105.0 326.4,103.3 349.1,102.8 350.2,100.6 371.8,100.6 396.6,101.2 414.4,102.4 423.1,106.7 440.0,110.9 453.9,112.8 463.1,115.1 472.4,118.3 481.7,120.6 490.9,123.4 500.2,126.7 509.4,130.4 520.0,135.0 524.8,136.6 535.6,140.4 546.4,143.6 557.2,146.9 568.0,150.7 580.0,155.5 622.6,175.0 635.6,179.3 646.4,183.1 657.2,186.3 668.0,190.7 678.6,195.0 687.3,198.8 693.8,199.9 702.4,203.1 711.0,206.3 717.5,206.9 726.2,210.1 737.0,214.4 745.6,217.1 758.6,220.4 787.3,220.6 789.8,222.5 807.1,222.5 810.8,220.6 836.7,220.6 839.2,218.8 851.5,218.8 854.0,216.9 861.4,216.3 868.0,214.4" fill="none" stroke="#bc1e2a" stroke-width="1.5" stroke-linejoin="round"/>
<polyline points="12.0,54.0 40.6,58.7 50.7,62.4 61.9,67.0 74.8,68.9 91.5,68.9 98.9,71.2 109.6,74.6 118.5,74.5 124.0,76.4 141.7,76.9 150.0,80.6 159.3,84.7 169.4,87.0 176.9,91.7 185.2,95.0 193.5,98.2 202.8,101.0 211.7,104.4 217.6,106.1 230.6,109.8 240.3,112.9 249.1,113.5 258.3,116.8 266.7,118.8 276.0,120.0 294.0,119.8 311.3,119.0 321.0,117.4 325.4,113.6 336.2,107.7 349.1,104.4 357.8,102.8 371.8,101.7 377.2,102.3 388.0,102.8 395.0,103.0 409.0,104.6 420.9,112.1 433.9,116.5 440.0,118.3 449.3,123.0 453.9,124.8 463.1,129.4 472.4,133.6 481.7,138.7 490.9,142.0 500.2,145.6 507.6,151.7 514.1,155.4 520.0,159.0 524.8,160.9 535.6,164.7 542.1,166.9 551.8,170.1 559.4,172.8 568.0,176.6 580.0,183.6 587.0,186.9 597.8,193.9 606.4,200.4 616.2,204.2 629.1,209.0 642.1,213.3 657.2,218.2 670.0,220.4 676.5,223.1 686.2,229.0 699.2,232.8 707.8,236.6 717.5,236.6 724.0,239.3 734.8,242.0 745.6,244.7 752.1,245.2 762.9,245.2 767.2,242.5 775.0,241.0 782.4,240.4 792.3,237.9 799.7,235.4 807.1,233.6 819.4,229.9 826.9,226.8 836.7,223.1 846.6,219.4 854.0,216.9 861.4,215.1 868.0,212.6" fill="none" stroke="#1c1cc4" stroke-width="1.5" stroke-linejoin="round"/>
<rect x="28" y="308.1" width="1" height="1.5" fill="#cc2630" opacity="0.6"/>
<rect x="28" y="308.6" width="2" height="1" fill="#cc2630" opacity="0.36"/>
<rect x="32" y="308.1" width="1" height="1.5" fill="#cc2630" opacity="0.6"/>
<rect x="32" y="308.6" width="2" height="1" fill="#cc2630" opacity="0.36"/>
<rect x="38" y="308.1" width="1" height="1.5" fill="#cc2630" opacity="0.6"/>
<rect x="38" y="308.6" width="2" height="1" fill="#cc2630" opacity="0.36"/>
<rect x="43" y="308.1" width="1" height="1.5" fill="#cc2630" opacity="0.6"/>
<rect x="43" y="308.6" width="2" height="1" fill="#cc2630" opacity="0.36"/>
<rect x="48" y="308.1" width="1" height="1.5" fill="#cc2630" opacity="0.6"/>
<rect x="48" y="308.6" width="2" height="1" fill="#cc2630" opacity="0.36"/>
<rect x="52" y="308.1" width="1" height="1.5" fill="#cc2630" opacity="0.6"/>
<rect x="52" y="308.6" width="2" height="1" fill="#cc2630" opacity="0.36"/>
<rect x="57" y="308.1" width="1" height="1.5" fill="#cc2630" opacity="0.6"/>
<rect x="57" y="308.6" width="2" height="1" fill="#cc2630" opacity="0.36"/>
<rect x="61" y="308.1" width="1" height="1.5" fill="#cc2630" opacity="0.6"/>
<rect x="61" y="308.6" width="2" height="1" fill="#cc2630" opacity="0.36"/>
<rect x="66" y="308.1" width="1" height="1.5" fill="#cc2630" opacity="0.6"/>
<rect x="66" y="308.6" width="2" height="1" fill="#cc2630" opacity="0.36"/>
<rect x="71" y="308.1" width="1" height="1.5" fill="#cc2630" opacity="0.6"/>
<rect x="71" y="308.6" width="2" height="1" fill="#cc2630" opacity="0.36"/>
<rect x="76" y="308.1" width="1" height="1.5" fill="#cc2630" opacity="0.6"/>
<rect x="76" y="308.6" width="2" height="1" fill="#cc2630" opacity="0.36"/>
<rect x="81" y="308.1" width="1" height="1.5" fill="#cc2630" opacity="0.6"/>
<rect x="81" y="308.6" width="2" height="1" fill="#cc2630" opacity="0.36"/>
<rect x="86" y="308.1" width="1" height="1.5" fill="#cc2630" opacity="0.6"/>
<rect x="86" y="308.6" width="2" height="1" fill="#cc2630" opacity="0.36"/>
<rect x="91" y="308.1" width="1" height="1.5" fill="#cc2630" opacity="0.6"/>
<rect x="91" y="308.6" width="2" height="1" fill="#cc2630" opacity="0.36"/>
<rect x="97" y="308.1" width="1" height="1.5" fill="#cc2630" opacity="0.6"/>
<rect x="97" y="308.6" width="2" height="1" fill="#cc2630" opacity="0.36"/>
<rect x="102" y="308.1" width="1" height="1.5" fill="#cc2630" opacity="0.6"/>
<rect x="102" y="308.6" width="2" height="1" fill="#cc2630" opacity="0.36"/>
<rect x="106" y="308.1" width="1" height="1.5" fill="#cc2630" opacity="0.6"/>
<rect x="106" y="308.6" width="2" height="1" fill="#cc2630" opacity="0.36"/>
<rect x="111" y="308.1" width="1" height="1.5" fill="#cc2630" opacity="0.6"/>
<rect x="111" y="308.6" width="2" height="1" fill="#cc2630" opacity="0.36"/>
<rect x="115" y="308.1" width="1" height="1.5" fill="#cc2630" opacity="0.6"/>
<rect x="115" y="308.6" width="2" height="1" fill="#cc2630" opacity="0.36"/>
<rect x="121" y="308.1" width="1" height="1.5" fill="#cc2630" opacity="0.6"/>
<rect x="121" y="308.6" width="2" height="1" fill="#cc2630" opacity="0.36"/>
<rect x="126" y="308.1" width="1" height="1.5" fill="#cc2630" opacity="0.6"/>
<rect x="126" y="308.6" width="2" height="1" fill="#cc2630" opacity="0.36"/>
<rect x="130" y="308.1" width="1" height="1.5" fill="#cc2630" opacity="0.6"/>
<rect x="130" y="308.6" width="2" height="1" fill="#cc2630" opacity="0.36"/>
<rect x="136" y="308.1" width="1" height="1.5" fill="#cc2630" opacity="0.6"/>
<rect x="136" y="308.6" width="2" height="1" fill="#cc2630" opacity="0.36"/>
<rect x="140" y="308.1" width="1" height="1.5" fill="#cc2630" opacity="0.6"/>
<rect x="140" y="308.6" width="2" height="1" fill="#cc2630" opacity="0.36"/>
<rect x="145" y="308.1" width="1" height="1.5" fill="#cc2630" opacity="0.6"/>
<rect x="145" y="308.6" width="2" height="1" fill="#cc2630" opacity="0.36"/>
<rect x="150" y="308.1" width="1" height="1.5" fill="#cc2630" opacity="0.6"/>
<rect x="150" y="308.6" width="2" height="1" fill="#cc2630" opacity="0.36"/>
<rect x="155" y="308.1" width="1" height="1.5" fill="#cc2630" opacity="0.6"/>
<rect x="155" y="308.6" width="2" height="1" fill="#cc2630" opacity="0.36"/>
<rect x="160" y="308.1" width="1" height="1.5" fill="#cc2630" opacity="0.6"/>
<rect x="160" y="308.6" width="2" height="1" fill="#cc2630" opacity="0.36"/>
<rect x="164" y="308.1" width="1" height="1.5" fill="#cc2630" opacity="0.6"/>
<rect x="164" y="308.6" width="2" height="1" fill="#cc2630" opacity="0.36"/>
<rect x="169" y="308.1" width="1" height="1.5" fill="#cc2630" opacity="0.6"/>
<rect x="169" y="308.6" width="2" height="1" fill="#cc2630" opacity="0.36"/>
<rect x="174" y="308.1" width="1" height="1.5" fill="#cc2630" opacity="0.6"/>
<rect x="174" y="308.6" width="2" height="1" fill="#cc2630" opacity="0.36"/>
<rect x="179" y="308.1" width="1" height="1.5" fill="#cc2630" opacity="0.6"/>
<rect x="179" y="308.6" width="2" height="1" fill="#cc2630" opacity="0.36"/>
<rect x="185" y="308.1" width="1" height="1.5" fill="#cc2630" opacity="0.6"/>
<rect x="185" y="308.6" width="2" height="1" fill="#cc2630" opacity="0.36"/>
<rect x="190" y="308.1" width="1" height="1.5" fill="#cc2630" opacity="0.6"/>
<rect x="190" y="308.6" width="2" height="1" fill="#cc2630" opacity="0.36"/>
<rect x="193" y="308.1" width="1" height="1.5" fill="#cc2630" opacity="0.6"/>
<rect x="193" y="308.6" width="2" height="1" fill="#cc2630" opacity="0.36"/>
<rect x="198" y="308.1" width="1" height="1.5" fill="#cc2630" opacity="0.6"/>
<rect x="198" y="308.6" width="2" height="1" fill="#cc2630" opacity="0.36"/>
<rect x="203" y="308.1" width="1" height="1.5" fill="#cc2630" opacity="0.6"/>
<rect x="203" y="308.6" width="2" height="1" fill="#cc2630" opacity="0.36"/>
<rect x="208" y="308.1" width="1" height="1.5" fill="#cc2630" opacity="0.6"/>
<rect x="208" y="308.6" width="2" height="1" fill="#cc2630" opacity="0.36"/>
<rect x="214" y="308.1" width="1" height="1.5" fill="#cc2630" opacity="0.6"/>
<rect x="214" y="308.6" width="2" height="1" fill="#cc2630" opacity="0.36"/>
<rect x="218" y="308.1" width="1" height="1.5" fill="#cc2630" opacity="0.6"/>
<rect x="218" y="308.6" width="2" height="1" fill="#cc2630" opacity="0.36"/>
<rect x="223" y="308.1" width="1" height="1.5" fill="#cc2630" opacity="0.6"/>
<rect x="223" y="308.6" width="2" height="1" fill="#cc2630" opacity="0.36"/>
<rect x="228" y="308.1" width="1" height="1.5" fill="#cc2630" opacity="0.6"/>
<rect x="228" y="308.6" width="2" height="1" fill="#cc2630" opacity="0.36"/>
<rect x="233" y="308.1" width="1" height="1.5" fill="#cc2630" opacity="0.6"/>
<rect x="233" y="308.6" width="2" height="1" fill="#cc2630" opacity="0.36"/>
<rect x="238" y="308.1" width="1" height="1.5" fill="#cc2630" opacity="0.6"/>
<rect x="238" y="308.6" width="2" height="1" fill="#cc2630" opacity="0.36"/>
<rect x="242" y="308.1" width="1" height="1.5" fill="#cc2630" opacity="0.7"/>
<rect x="242" y="308.6" width="2" height="1" fill="#cc2630" opacity="0.42"/>
<rect x="247" y="308.1" width="1" height="1.5" fill="#cc2630" opacity="0.7"/>
<rect x="247" y="308.6" width="2" height="1" fill="#cc2630" opacity="0.42"/>
<rect x="253" y="308.1" width="1" height="1.5" fill="#cc2630" opacity="0.7"/>
<rect x="253" y="308.6" width="2" height="1" fill="#cc2630" opacity="0.42"/>
<rect x="258" y="308.1" width="1" height="1.5" fill="#cc2630" opacity="0.7"/>
<rect x="258" y="308.6" width="2" height="1" fill="#cc2630" opacity="0.42"/>
<rect x="262" y="308.1" width="1" height="1.5" fill="#cc2630" opacity="0.7"/>
<rect x="262" y="308.6" width="2" height="1" fill="#cc2630" opacity="0.42"/>
<rect x="267" y="308.1" width="1" height="1.5" fill="#cc2630" opacity="0.7"/>
<rect x="267" y="308.6" width="2" height="1" fill="#cc2630" opacity="0.42"/>
<rect x="273" y="308.1" width="1" height="1.5" fill="#cc2630" opacity="0.7"/>
<rect x="273" y="308.6" width="2" height="1" fill="#cc2630" opacity="0.42"/>
<rect x="277" y="308.1" width="1" height="1.5" fill="#cc2630" opacity="0.7"/>
<rect x="277" y="308.6" width="2" height="1" fill="#cc2630" opacity="0.42"/>
<rect x="282" y="308.1" width="1" height="1.5" fill="#cc2630" opacity="0.7"/>
<rect x="282" y="308.6" width="2" height="1" fill="#cc2630" opacity="0.42"/>
<rect x="287" y="308.1" width="1" height="1.5" fill="#cc2630" opacity="0.7"/>
<rect x="287" y="308.6" width="2" height="1" fill="#cc2630" opacity="0.42"/>
<rect x="291" y="306.6" width="1" height="3.0" fill="#cc2630" opacity="0.9"/>
<rect x="291" y="308.6" width="2" height="1" fill="#cc2630" opacity="0.54"/>
<rect x="296" y="306.6" width="1" height="3.0" fill="#cc2630" opacity="0.9"/>
<rect x="296" y="308.6" width="2" height="1" fill="#cc2630" opacity="0.54"/>
<rect x="301" y="306.6" width="1" height="3.0" fill="#cc2630" opacity="0.9"/>
<rect x="301" y="308.6" width="2" height="1" fill="#cc2630" opacity="0.54"/>
<rect x="306" y="306.6" width="1" height="3.0" fill="#cc2630" opacity="0.9"/>
<rect x="306" y="308.6" width="2" height="1" fill="#cc2630" opacity="0.54"/>
<rect x="312" y="306.6" width="1" height="3.0" fill="#cc2630" opacity="0.9"/>
<rect x="312" y="308.6" width="2" height="1" fill="#cc2630" opacity="0.54"/>
<rect x="316" y="306.6" width="1" height="3.0" fill="#cc2630" opacity="0.9"/>
<rect x="316" y="308.6" width="2" height="1" fill="#cc2630" opacity="0.54"/>
<rect x="321" y="306.6" width="1" height="3.0" fill="#cc2630" opacity="0.9"/>
<rect x="321" y="308.6" width="2" height="1" fill="#cc2630" opacity="0.54"/>
<rect x="326" y="306.6" width="1" height="3.0" fill="#cc2630" opacity="0.9"/>
<rect x="326" y="308.6" width="2" height="1" fill="#cc2630" opacity="0.54"/>
<rect x="330" y="306.6" width="1" height="3.0" fill="#cc2630" opacity="0.9"/>
<rect x="330" y="308.6" width="2" height="1" fill="#cc2630" opacity="0.54"/>
<rect x="335" y="306.6" width="1" height="3.0" fill="#cc2630" opacity="0.9"/>
<rect x="335" y="308.6" width="2" height="1" fill="#cc2630" opacity="0.54"/>
<rect x="340" y="306.6" width="1" height="3.0" fill="#cc2630" opacity="0.9"/>
<rect x="340" y="308.6" width="2" height="1" fill="#cc2630" opacity="0.54"/>
<rect x="345" y="306.6" width="1" height="3.0" fill="#cc2630" opacity="0.9"/>
<rect x="345" y="308.6" width="2" height="1" fill="#cc2630" opacity="0.54"/>
<rect x="350" y="306.6" width="1" height="3.0" fill="#cc2630" opacity="0.9"/>
<rect x="350" y="308.6" width="2" height="1" fill="#cc2630" opacity="0.54"/>
<rect x="355" y="306.6" width="1" height="3.0" fill="#cc2630" opacity="0.9"/>
<rect x="355" y="308.6" width="2" height="1" fill="#cc2630" opacity="0.54"/>
<rect x="360" y="306.6" width="1" height="3.0" fill="#cc2630" opacity="0.9"/>
<rect x="360" y="308.6" width="2" height="1" fill="#cc2630" opacity="0.54"/>
<rect x="365" y="306.6" width="1" height="3.0" fill="#cc2630" opacity="0.9"/>
<rect x="365" y="308.6" width="2" height="1" fill="#cc2630" opacity="0.54"/>
<rect x="370" y="306.6" width="1" height="3.0" fill="#cc2630" opacity="0.9"/>
<rect x="370" y="308.6" width="2" height="1" fill="#cc2630" opacity="0.54"/>
<rect x="374" y="306.6" width="1" height="3.0" fill="#cc2630" opacity="0.9"/>
<rect x="374" y="308.6" width="2" height="1" fill="#cc2630" opacity="0.54"/>
<rect x="379" y="306.6" width="1" height="3.0" fill="#cc2630" opacity="0.9"/>
<rect x="379" y="308.6" width="2" height="1" fill="#cc2630" opacity="0.54"/>
<rect x="384" y="308.1" width="1" height="1.5" fill="#cc2630" opacity="0.7"/>
<rect x="384" y="308.6" width="2" height="1" fill="#cc2630" opacity="0.42"/>
<rect x="390" y="308.1" width="1" height="1.5" fill="#cc2630" opacity="0.7"/>
<rect x="390" y="308.6" width="2" height="1" fill="#cc2630" opacity="0.42"/>
<rect x="394" y="308.1" width="1" height="1.5" fill="#cc2630" opacity="0.7"/>
<rect x="394" y="308.6" width="2" height="1" fill="#cc2630" opacity="0.42"/>
<rect x="399" y="308.1" width="1" height="1.5" fill="#cc2630" opacity="0.7"/>
<rect x="399" y="308.6" width="2" height="1" fill="#cc2630" opacity="0.42"/>
<rect x="404" y="308.1" width="1" height="1.5" fill="#cc2630" opacity="0.7"/>
<rect x="404" y="308.6" width="2" height="1" fill="#cc2630" opacity="0.42"/>
<rect x="409" y="308.1" width="1" height="1.5" fill="#cc2630" opacity="0.7"/>
<rect x="409" y="308.6" width="2" height="1" fill="#cc2630" opacity="0.42"/>
<rect x="414" y="308.1" width="1" height="1.5" fill="#cc2630" opacity="0.7"/>
<rect x="414" y="308.6" width="2" height="1" fill="#cc2630" opacity="0.42"/>
<rect x="418" y="307.1" width="1" height="2.5" fill="#cc2630" opacity="0.85"/>
<rect x="418" y="308.6" width="2" height="1" fill="#cc2630" opacity="0.51"/>
<rect x="423" y="307.1" width="1" height="2.5" fill="#cc2630" opacity="0.85"/>
<rect x="423" y="308.6" width="2" height="1" fill="#cc2630" opacity="0.51"/>
<rect x="428" y="307.1" width="1" height="2.5" fill="#cc2630" opacity="0.85"/>
<rect x="428" y="308.6" width="2" height="1" fill="#cc2630" opacity="0.51"/>
<rect x="433" y="307.1" width="1" height="2.5" fill="#cc2630" opacity="0.85"/>
<rect x="433" y="308.6" width="2" height="1" fill="#cc2630" opacity="0.51"/>
<rect x="438" y="307.1" width="1" height="2.5" fill="#cc2630" opacity="0.85"/>
<rect x="438" y="308.6" width="2" height="1" fill="#cc2630" opacity="0.51"/>
<rect x="444" y="307.1" width="1" height="2.5" fill="#cc2630" opacity="0.85"/>
<rect x="444" y="308.6" width="2" height="1" fill="#cc2630" opacity="0.51"/>
<rect x="448" y="307.1" width="1" height="2.5" fill="#cc2630" opacity="0.85"/>
<rect x="448" y="308.6" width="2" height="1" fill="#cc2630" opacity="0.51"/>
<rect x="453" y="307.1" width="1" height="2.5" fill="#cc2630" opacity="0.85"/>
<rect x="453" y="308.6" width="2" height="1" fill="#cc2630" opacity="0.51"/>
<rect x="458" y="307.1" width="1" height="2.5" fill="#cc2630" opacity="0.85"/>
<rect x="458" y="308.6" width="2" height="1" fill="#cc2630" opacity="0.51"/>
<rect x="462" y="307.1" width="1" height="2.5" fill="#cc2630" opacity="0.85"/>
<rect x="462" y="308.6" width="2" height="1" fill="#cc2630" opacity="0.51"/>
<rect x="467" y="307.1" width="1" height="2.5" fill="#cc2630" opacity="0.85"/>
<rect x="467" y="308.6" width="2" height="1" fill="#cc2630" opacity="0.51"/>
<rect x="472" y="307.1" width="1" height="2.5" fill="#cc2630" opacity="0.85"/>
<rect x="472" y="308.6" width="2" height="1" fill="#cc2630" opacity="0.51"/>
<rect x="477" y="307.1" width="1" height="2.5" fill="#cc2630" opacity="0.85"/>
<rect x="477" y="308.6" width="2" height="1" fill="#cc2630" opacity="0.51"/>
<rect x="482" y="307.1" width="1" height="2.5" fill="#cc2630" opacity="0.85"/>
<rect x="482" y="308.6" width="2" height="1" fill="#cc2630" opacity="0.51"/>
<rect x="487" y="307.1" width="1" height="2.5" fill="#cc2630" opacity="0.85"/>
<rect x="487" y="308.6" width="2" height="1" fill="#cc2630" opacity="0.51"/>
<rect x="492" y="307.1" width="1" height="2.5" fill="#cc2630" opacity="0.85"/>
<rect x="492" y="308.6" width="2" height="1" fill="#cc2630" opacity="0.51"/>
<rect x="497" y="307.1" width="1" height="2.5" fill="#cc2630" opacity="0.85"/>
<rect x="497" y="308.6" width="2" height="1" fill="#cc2630" opacity="0.51"/>
<rect x="502" y="307.1" width="1" height="2.5" fill="#cc2630" opacity="0.85"/>
<rect x="502" y="308.6" width="2" height="1" fill="#cc2630" opacity="0.51"/>
<rect x="506" y="307.1" width="1" height="2.5" fill="#cc2630" opacity="0.85"/>
<rect x="506" y="308.6" width="2" height="1" fill="#cc2630" opacity="0.51"/>
<rect x="511" y="307.1" width="1" height="2.5" fill="#cc2630" opacity="0.85"/>
<rect x="511" y="308.6" width="2" height="1" fill="#cc2630" opacity="0.51"/>
<rect x="516" y="307.1" width="1" height="2.5" fill="#cc2630" opacity="0.85"/>
<rect x="516" y="308.6" width="2" height="1" fill="#cc2630" opacity="0.51"/>
<rect x="521" y="307.1" width="1" height="2.5" fill="#cc2630" opacity="0.85"/>
<rect x="521" y="308.6" width="2" height="1" fill="#cc2630" opacity="0.51"/>
<rect x="526" y="307.1" width="1" height="2.5" fill="#cc2630" opacity="0.85"/>
<rect x="526" y="308.6" width="2" height="1" fill="#cc2630" opacity="0.51"/>
<rect x="531" y="307.1" width="1" height="2.5" fill="#cc2630" opacity="0.85"/>
<rect x="531" y="308.6" width="2" height="1" fill="#cc2630" opacity="0.51"/>
<rect x="536" y="307.1" width="1" height="2.5" fill="#cc2630" opacity="0.85"/>
<rect x="536" y="308.6" width="2" height="1" fill="#cc2630" opacity="0.51"/>
<rect x="542" y="307.1" width="1" height="2.5" fill="#cc2630" opacity="0.85"/>
<rect x="542" y="308.6" width="2" height="1" fill="#cc2630" opacity="0.51"/>
<rect x="546" y="307.1" width="1" height="2.5" fill="#cc2630" opacity="0.85"/>
<rect x="546" y="308.6" width="2" height="1" fill="#cc2630" opacity="0.51"/>
<rect x="550" y="307.1" width="1" height="2.5" fill="#cc2630" opacity="0.85"/>
<rect x="550" y="308.6" width="2" height="1" fill="#cc2630" opacity="0.51"/>
<rect x="556" y="307.1" width="1" height="2.5" fill="#cc2630" opacity="0.85"/>
<rect x="556" y="308.6" width="2" height="1" fill="#cc2630" opacity="0.51"/>
<rect x="561" y="307.1" width="1" height="2.5" fill="#cc2630" opacity="0.85"/>
<rect x="561" y="308.6" width="2" height="1" fill="#cc2630" opacity="0.51"/>
<rect x="565" y="307.1" width="1" height="2.5" fill="#cc2630" opacity="0.85"/>
<rect x="565" y="308.6" width="2" height="1" fill="#cc2630" opacity="0.51"/>
<rect x="570" y="307.1" width="1" height="2.5" fill="#cc2630" opacity="0.85"/>
<rect x="570" y="308.6" width="2" height="1" fill="#cc2630" opacity="0.51"/>
<rect x="575" y="307.1" width="1" height="2.5" fill="#cc2630" opacity="0.85"/>
<rect x="575" y="308.6" width="2" height="1" fill="#cc2630" opacity="0.51"/>
<rect x="580" y="307.1" width="1" height="2.5" fill="#cc2630" opacity="0.85"/>
<rect x="580" y="308.6" width="2" height="1" fill="#cc2630" opacity="0.51"/>
<rect x="585" y="307.1" width="1" height="2.5" fill="#cc2630" opacity="0.85"/>
<rect x="585" y="308.6" width="2" height="1" fill="#cc2630" opacity="0.51"/>
<rect x="591" y="307.1" width="1" height="2.5" fill="#cc2630" opacity="0.85"/>
<rect x="591" y="308.6" width="2" height="1" fill="#cc2630" opacity="0.51"/>
<rect x="595" y="307.1" width="1" height="2.5" fill="#cc2630" opacity="0.85"/>
<rect x="595" y="308.6" width="2" height="1" fill="#cc2630" opacity="0.51"/>
<rect x="599" y="307.1" width="1" height="2.5" fill="#cc2630" opacity="0.85"/>
<rect x="599" y="308.6" width="2" height="1" fill="#cc2630" opacity="0.51"/>
<rect x="604" y="307.1" width="1" height="2.5" fill="#cc2630" opacity="0.85"/>
<rect x="604" y="308.6" width="2" height="1" fill="#cc2630" opacity="0.51"/>
<rect x="610" y="307.1" width="1" height="2.5" fill="#cc2630" opacity="0.85"/>
<rect x="610" y="308.6" width="2" height="1" fill="#cc2630" opacity="0.51"/>
<rect x="614" y="307.1" width="1" height="2.5" fill="#cc2630" opacity="0.85"/>
<rect x="614" y="308.6" width="2" height="1" fill="#cc2630" opacity="0.51"/>
<rect x="619" y="307.1" width="1" height="2.5" fill="#cc2630" opacity="0.85"/>
<rect x="619" y="308.6" width="2" height="1" fill="#cc2630" opacity="0.51"/>
<rect x="624" y="307.1" width="1" height="2.5" fill="#cc2630" opacity="0.85"/>
<rect x="624" y="308.6" width="2" height="1" fill="#cc2630" opacity="0.51"/>
<rect x="629" y="307.1" width="1" height="2.5" fill="#cc2630" opacity="0.85"/>
<rect x="629" y="308.6" width="2" height="1" fill="#cc2630" opacity="0.51"/>
<rect x="634" y="307.1" width="1" height="2.5" fill="#cc2630" opacity="0.85"/>
<rect x="634" y="308.6" width="2" height="1" fill="#cc2630" opacity="0.51"/>
<rect x="639" y="307.1" width="1" height="2.5" fill="#cc2630" opacity="0.85"/>
<rect x="639" y="308.6" width="2" height="1" fill="#cc2630" opacity="0.51"/>
<rect x="643" y="308.6" width="1" height="1.0" fill="#cc2630" opacity="0.5"/>
<rect x="643" y="308.6" width="2" height="1" fill="#cc2630" opacity="0.30"/>
<rect x="649" y="308.6" width="1" height="1.0" fill="#cc2630" opacity="0.5"/>
<rect x="649" y="308.6" width="2" height="1" fill="#cc2630" opacity="0.30"/>
<rect x="653" y="308.6" width="1" height="1.0" fill="#cc2630" opacity="0.5"/>
<rect x="653" y="308.6" width="2" height="1" fill="#cc2630" opacity="0.30"/>
<rect x="658" y="308.6" width="1" height="1.0" fill="#cc2630" opacity="0.5"/>
<rect x="658" y="308.6" width="2" height="1" fill="#cc2630" opacity="0.30"/>
<rect x="663" y="308.6" width="1" height="1.0" fill="#cc2630" opacity="0.5"/>
<rect x="663" y="308.6" width="2" height="1" fill="#cc2630" opacity="0.30"/>
<rect x="668" y="308.6" width="1" height="1.0" fill="#cc2630" opacity="0.5"/>
<rect x="668" y="308.6" width="2" height="1" fill="#cc2630" opacity="0.30"/>
<rect x="674" y="308.6" width="1" height="1.0" fill="#cc2630" opacity="0.5"/>
<rect x="674" y="308.6" width="2" height="1" fill="#cc2630" opacity="0.30"/>
<rect x="678" y="308.6" width="1" height="1.0" fill="#cc2630" opacity="0.5"/>
<rect x="678" y="308.6" width="2" height="1" fill="#cc2630" opacity="0.30"/>
<rect x="683" y="308.6" width="1" height="1.0" fill="#cc2630" opacity="0.5"/>
<rect x="683" y="308.6" width="2" height="1" fill="#cc2630" opacity="0.30"/>
<rect x="687" y="308.6" width="1" height="1.0" fill="#cc2630" opacity="0.5"/>
<rect x="687" y="308.6" width="2" height="1" fill="#cc2630" opacity="0.30"/>
<rect x="692" y="308.6" width="1" height="1.0" fill="#cc2630" opacity="0.5"/>
<rect x="692" y="308.6" width="2" height="1" fill="#cc2630" opacity="0.30"/>
<rect x="697" y="308.6" width="1" height="1.0" fill="#cc2630" opacity="0.5"/>
<rect x="697" y="308.6" width="2" height="1" fill="#cc2630" opacity="0.30"/>
<rect x="702" y="308.6" width="1" height="1.0" fill="#cc2630" opacity="0.5"/>
<rect x="702" y="308.6" width="2" height="1" fill="#cc2630" opacity="0.30"/>
<rect x="707" y="308.6" width="1" height="1.0" fill="#cc2630" opacity="0.5"/>
<rect x="707" y="308.6" width="2" height="1" fill="#cc2630" opacity="0.30"/>
<rect x="712" y="308.6" width="1" height="1.0" fill="#cc2630" opacity="0.5"/>
<rect x="712" y="308.6" width="2" height="1" fill="#cc2630" opacity="0.30"/>
<rect x="717" y="308.6" width="1" height="1.0" fill="#cc2630" opacity="0.5"/>
<rect x="717" y="308.6" width="2" height="1" fill="#cc2630" opacity="0.30"/>
<rect x="722" y="307.1" width="1" height="2.5" fill="#cc2630" opacity="0.95"/>
<rect x="722" y="308.6" width="2" height="1" fill="#cc2630" opacity="0.57"/>
<rect x="726" y="307.0" width="1" height="2.6" fill="#cc2630" opacity="0.95"/>
<rect x="726" y="308.6" width="2" height="1" fill="#cc2630" opacity="0.57"/>
<rect x="731" y="307.0" width="1" height="2.6" fill="#cc2630" opacity="0.95"/>
<rect x="731" y="308.6" width="2" height="1" fill="#cc2630" opacity="0.57"/>
<rect x="736" y="306.9" width="1" height="2.7" fill="#cc2630" opacity="0.95"/>
<rect x="736" y="308.6" width="2" height="1" fill="#cc2630" opacity="0.57"/>
<rect x="741" y="306.9" width="1" height="2.7" fill="#cc2630" opacity="0.95"/>
<rect x="741" y="308.6" width="2" height="1" fill="#cc2630" opacity="0.57"/>
<rect x="746" y="306.8" width="1" height="2.8" fill="#cc2630" opacity="0.95"/>
<rect x="746" y="308.6" width="2" height="1" fill="#cc2630" opacity="0.57"/>
<rect x="752" y="306.8" width="1" height="2.8" fill="#cc2630" opacity="0.95"/>
<rect x="752" y="308.6" width="2" height="1" fill="#cc2630" opacity="0.57"/>
<rect x="756" y="306.7" width="1" height="2.9" fill="#cc2630" opacity="0.95"/>
<rect x="756" y="308.6" width="2" height="1" fill="#cc2630" opacity="0.57"/>
<rect x="762" y="306.7" width="1" height="2.9" fill="#cc2630" opacity="0.95"/>
<rect x="762" y="308.6" width="2" height="1" fill="#cc2630" opacity="0.57"/>
<rect x="766" y="306.6" width="1" height="3.0" fill="#cc2630" opacity="0.95"/>
<rect x="766" y="308.6" width="2" height="1" fill="#cc2630" opacity="0.57"/>
<rect x="772" y="306.6" width="1" height="3.0" fill="#cc2630" opacity="0.95"/>
<rect x="772" y="308.6" width="2" height="1" fill="#cc2630" opacity="0.57"/>
<rect x="776" y="306.5" width="1" height="3.1" fill="#cc2630" opacity="0.95"/>
<rect x="776" y="308.6" width="2" height="1" fill="#cc2630" opacity="0.57"/>
<rect x="780" y="306.5" width="1" height="3.1" fill="#cc2630" opacity="0.95"/>
<rect x="780" y="308.6" width="2" height="1" fill="#cc2630" opacity="0.57"/>
<rect x="785" y="306.4" width="1" height="3.2" fill="#cc2630" opacity="0.95"/>
<rect x="785" y="308.6" width="2" height="1" fill="#cc2630" opacity="0.57"/>
<rect x="790" y="306.4" width="1" height="3.2" fill="#cc2630" opacity="0.95"/>
<rect x="790" y="308.6" width="2" height="1" fill="#cc2630" opacity="0.57"/>
<rect x="795" y="306.3" width="1" height="3.3" fill="#cc2630" opacity="0.95"/>
<rect x="795" y="308.6" width="2" height="1" fill="#cc2630" opacity="0.57"/>
<rect x="801" y="306.3" width="1" height="3.3" fill="#cc2630" opacity="0.95"/>
<rect x="801" y="308.6" width="2" height="1" fill="#cc2630" opacity="0.57"/>
<rect x="805" y="306.2" width="1" height="3.4" fill="#cc2630" opacity="0.95"/>
<rect x="805" y="308.6" width="2" height="1" fill="#cc2630" opacity="0.57"/>
<rect x="810" y="306.2" width="1" height="3.4" fill="#cc2630" opacity="0.95"/>
<rect x="810" y="308.6" width="2" height="1" fill="#cc2630" opacity="0.57"/>
<rect x="815" y="306.1" width="1" height="3.5" fill="#cc2630" opacity="0.95"/>
<rect x="815" y="308.6" width="2" height="1" fill="#cc2630" opacity="0.57"/>
<rect x="819" y="306.1" width="1" height="3.5" fill="#cc2630" opacity="0.95"/>
<rect x="819" y="308.6" width="2" height="1" fill="#cc2630" opacity="0.57"/>
<rect x="824" y="306.0" width="1" height="3.6" fill="#cc2630" opacity="0.95"/>
<rect x="824" y="308.6" width="2" height="1" fill="#cc2630" opacity="0.57"/>
<rect x="829" y="306.0" width="1" height="3.6" fill="#cc2630" opacity="0.95"/>
<rect x="829" y="308.6" width="2" height="1" fill="#cc2630" opacity="0.57"/>
<rect x="834" y="305.9" width="1" height="3.7" fill="#cc2630" opacity="0.95"/>
<rect x="834" y="308.6" width="2" height="1" fill="#cc2630" opacity="0.57"/>
<rect x="839" y="305.9" width="1" height="3.7" fill="#cc2630" opacity="0.95"/>
<rect x="839" y="308.6" width="2" height="1" fill="#cc2630" opacity="0.57"/>
<rect x="844" y="305.8" width="1" height="3.8" fill="#cc2630" opacity="0.95"/>
<rect x="844" y="308.6" width="2" height="1" fill="#cc2630" opacity="0.57"/>
<rect x="849" y="305.8" width="1" height="3.8" fill="#cc2630" opacity="0.95"/>
<rect x="849" y="308.6" width="2" height="1" fill="#cc2630" opacity="0.57"/>
<rect x="855" y="305.7" width="1" height="3.9" fill="#cc2630" opacity="0.95"/>
<rect x="855" y="308.6" width="2" height="1" fill="#cc2630" opacity="0.57"/>
<rect x="859" y="305.7" width="1" height="3.9" fill="#cc2630" opacity="0.95"/>
<rect x="859" y="308.6" width="2" height="1" fill="#cc2630" opacity="0.57"/>
<rect x="863" y="305.6" width="1" height="4.0" fill="#cc2630" opacity="0.95"/>
<rect x="863" y="308.6" width="2" height="1" fill="#cc2630" opacity="0.57"/>
<rect x="868" y="305.6" width="1" height="4.0" fill="#cc2630" opacity="0.95"/>
<rect x="868" y="308.6" width="2" height="1" fill="#cc2630" opacity="0.57"/>
<polyline points="29.8,310.8 41.2,312.9 53.8,314.4 82.9,315.0 108.0,315.0 147.5,316.5 166.0,318.5 187.0,320.6 218.0,321.2 239.0,321.6 260.0,321.4 283.8,321.2 296.2,318.5 319.2,317.5 333.8,313.3 348.3,311.2 375.4,310.2 406.7,311.2 427.5,314.4 448.3,316.5 470.0,318.5 480.4,321.2 501.0,322.7 515.8,324.8 563.8,325.8 588.8,329.0 615.8,330.4 630.4,331.0 661.7,329.0 680.4,329.0 710.0,329.6 722.5,326.9 743.3,326.9 760.0,324.8 776.7,322.7 795.4,320.6 805.8,317.9 826.7,314.4 843.3,310.8 857.9,309.2 868.3,308.1" fill="none" stroke="#c42a2a" stroke-width="2"/>
<polyline points="12.0,308.5 30.8,309.2 51.7,312.3 82.9,314.4 151.7,316.5 187.0,318.5 218.3,320.6 240.0,321.2 281.7,321.2 302.5,320.0 323.3,317.5 335.8,315.4 348.3,312.9 375.4,311.2 406.7,310.8 427.5,312.3 448.3,314.4 470.0,317.1 490.8,318.5 511.7,321.2 532.5,324.2 563.8,324.8 595.0,326.2 615.8,328.3 657.5,329.0 712.0,329.0 743.3,327.5 764.0,326.2 785.0,323.8 805.8,320.6 826.7,317.1 847.5,313.3 868.3,310.2" fill="none" stroke="#1a8a22" stroke-width="2" opacity="0.8"/>
<rect x="12" y="346" width="856" height="2" fill="#1414a8"/>
<rect x="12" y="384" width="856" height="2" fill="#1414a8"/>
<defs><linearGradient id="rg" x1="0" y1="344" x2="0" y2="385" gradientUnits="userSpaceOnUse"><stop offset="0" stop-color="#8c3a00" stop-opacity="0.62"/><stop offset="0.4" stop-color="#8c3a00" stop-opacity="0.34"/><stop offset="0.78" stop-color="#8c3a00" stop-opacity="0.1"/><stop offset="1" stop-color="#8c3a00" stop-opacity="0.03"/></linearGradient></defs>
<polygon points="263.0,385.0 263.0,384.5 265.3,383.3 271.6,379.4 279.4,371.6 285.6,370.8 296.6,362.2 305.9,362.2 312.2,368.5 316.1,369.2 321.6,355.2 326.2,345.0 330.2,343.5 333.3,346.6 335.6,348.9 340.3,348.2 345.8,357.5 351.2,357.5 360.6,361.4 366.9,360.7 373.1,361.4 379.4,369.2 388.8,368.5 395.0,370.8 399.4,373.2 404.8,369.2 408.8,377.0 415.0,383.6 415.0,385.0" fill="url(#rg)"/>
<polygon points="748.0,385.0 748.0,379.2 751.1,377.8 756.6,366.1 762.0,374.7 766.7,355.2 771.4,357.5 776.1,363.0 780.8,365.3 784.7,364.2 790.2,366.4 795.6,357.5 799.5,358.3 805.8,358.3 809.7,356.4 814.4,355.2 819.8,365.8 823.8,357.5 829.2,353.9 834.7,358.6 839.4,358.3 844.8,353.3 849.5,360.7 855.0,357.1 858.9,358.6 863.6,355.5 867.5,353.3 867.5,385.0" fill="url(#rg)"/>
<line x1="12.0" y1="366.3" x2="15.0" y2="366.0" stroke="#f0882c" stroke-width="1.15" stroke-linecap="round"/>
<line x1="15.0" y1="366.0" x2="19.0" y2="369.0" stroke="#f0882c" stroke-width="1.15" stroke-linecap="round"/>
<line x1="19.0" y1="369.0" x2="22.4" y2="367.3" stroke="#f0882c" stroke-width="1.15" stroke-linecap="round"/>
<line x1="22.4" y1="367.3" x2="25.0" y2="373.0" stroke="#f0882c" stroke-width="1.15" stroke-linecap="round"/>
<line x1="25.0" y1="373.0" x2="30.0" y2="378.0" stroke="#f0882c" stroke-width="1.15" stroke-linecap="round"/>
<line x1="30.0" y1="378.0" x2="40.0" y2="376.0" stroke="#f0882c" stroke-width="1.15" stroke-linecap="round"/>
<line x1="40.0" y1="376.0" x2="50.0" y2="374.0" stroke="#f0882c" stroke-width="1.15" stroke-linecap="round"/>
<line x1="50.0" y1="374.0" x2="60.0" y2="376.0" stroke="#f0882c" stroke-width="1.15" stroke-linecap="round"/>
<line x1="60.0" y1="376.0" x2="72.9" y2="374.5" stroke="#f0882c" stroke-width="1.15" stroke-linecap="round"/>
<line x1="72.9" y1="374.5" x2="76.3" y2="372.0" stroke="#f0882c" stroke-width="1.15" stroke-linecap="round"/>
<line x1="76.3" y1="372.0" x2="81.9" y2="376.5" stroke="#f0882c" stroke-width="1.15" stroke-linecap="round"/>
<line x1="81.9" y1="376.5" x2="86.2" y2="367.3" stroke="#f0882c" stroke-width="1.15" stroke-linecap="round"/>
<line x1="86.2" y1="367.3" x2="91.8" y2="371.3" stroke="#f0882c" stroke-width="1.15" stroke-linecap="round"/>
<line x1="91.8" y1="371.3" x2="100.8" y2="376.5" stroke="#f0882c" stroke-width="1.15" stroke-linecap="round"/>
<line x1="100.8" y1="376.5" x2="111.8" y2="376.5" stroke="#f0882c" stroke-width="1.15" stroke-linecap="round"/>
<line x1="111.8" y1="376.5" x2="119.8" y2="375.3" stroke="#f0882c" stroke-width="1.15" stroke-linecap="round"/>
<line x1="119.8" y1="375.3" x2="125.8" y2="370.3" stroke="#f0882c" stroke-width="1.15" stroke-linecap="round"/>
<line x1="125.8" y1="370.3" x2="130.8" y2="371.0" stroke="#f0882c" stroke-width="1.15" stroke-linecap="round"/>
<line x1="130.8" y1="371.0" x2="135.8" y2="373.0" stroke="#f0882c" stroke-width="1.15" stroke-linecap="round"/>
<line x1="135.8" y1="373.0" x2="143.7" y2="373.3" stroke="#f0882c" stroke-width="1.15" stroke-linecap="round"/>
<line x1="143.7" y1="373.3" x2="146.7" y2="376.0" stroke="#f0882c" stroke-width="1.15" stroke-linecap="round"/>
<line x1="146.7" y1="376.0" x2="149.7" y2="387.5" stroke="#f0882c" stroke-width="1.15" stroke-linecap="round"/>
<line x1="149.7" y1="387.5" x2="153.7" y2="381.0" stroke="#38c0c8" stroke-width="1.15" stroke-linecap="round"/>
<line x1="153.7" y1="381.0" x2="159.7" y2="380.3" stroke="#f0882c" stroke-width="1.15" stroke-linecap="round"/>
<line x1="159.7" y1="380.3" x2="164.7" y2="382.3" stroke="#f0882c" stroke-width="1.15" stroke-linecap="round"/>
<line x1="164.7" y1="382.3" x2="169.7" y2="383.0" stroke="#f0882c" stroke-width="1.15" stroke-linecap="round"/>
<line x1="169.7" y1="383.0" x2="173.7" y2="387.0" stroke="#38c0c8" stroke-width="1.15" stroke-linecap="round"/>
<line x1="173.7" y1="387.0" x2="179.7" y2="387.5" stroke="#28c028" stroke-width="1.15" stroke-linecap="round"/>
<line x1="179.7" y1="387.5" x2="183.7" y2="385.0" stroke="#28c028" stroke-width="1.15" stroke-linecap="round"/>
<line x1="183.7" y1="385.0" x2="189.7" y2="383.3" stroke="#38c0c8" stroke-width="1.15" stroke-linecap="round"/>
<line x1="189.7" y1="383.3" x2="191.7" y2="383.5" stroke="#f0882c" stroke-width="1.15" stroke-linecap="round"/>
<line x1="191.7" y1="383.5" x2="201.6" y2="385.0" stroke="#38c0c8" stroke-width="1.15" stroke-linecap="round"/>
<line x1="201.6" y1="385.0" x2="207.6" y2="387.3" stroke="#28c028" stroke-width="1.15" stroke-linecap="round"/>
<line x1="207.6" y1="387.3" x2="215.6" y2="387.3" stroke="#28c028" stroke-width="1.15" stroke-linecap="round"/>
<line x1="215.6" y1="387.3" x2="219.6" y2="385.0" stroke="#28c028" stroke-width="1.15" stroke-linecap="round"/>
<line x1="219.6" y1="385.0" x2="224.7" y2="383.3" stroke="#38c0c8" stroke-width="1.15" stroke-linecap="round"/>
<line x1="224.7" y1="383.3" x2="229.4" y2="384.9" stroke="#38c0c8" stroke-width="1.15" stroke-linecap="round"/>
<line x1="229.4" y1="384.9" x2="234.0" y2="388.8" stroke="#28c028" stroke-width="1.15" stroke-linecap="round"/>
<line x1="234.0" y1="388.8" x2="237.2" y2="388.0" stroke="#28c028" stroke-width="1.15" stroke-linecap="round"/>
<line x1="237.2" y1="388.0" x2="243.4" y2="376.3" stroke="#f0882c" stroke-width="1.15" stroke-linecap="round"/>
<line x1="243.4" y1="376.3" x2="247.3" y2="376.3" stroke="#f0882c" stroke-width="1.15" stroke-linecap="round"/>
<line x1="247.3" y1="376.3" x2="256.7" y2="383.6" stroke="#f0882c" stroke-width="1.15" stroke-linecap="round"/>
<line x1="256.7" y1="383.6" x2="262.2" y2="384.9" stroke="#38c0c8" stroke-width="1.15" stroke-linecap="round"/>
<line x1="262.2" y1="384.9" x2="265.3" y2="383.3" stroke="#38c0c8" stroke-width="1.15" stroke-linecap="round"/>
<line x1="265.3" y1="383.3" x2="271.6" y2="379.4" stroke="#f0882c" stroke-width="1.15" stroke-linecap="round"/>
<line x1="271.6" y1="379.4" x2="279.4" y2="371.6" stroke="#f0882c" stroke-width="1.15" stroke-linecap="round"/>
<line x1="279.4" y1="371.6" x2="285.6" y2="370.8" stroke="#f0882c" stroke-width="1.15" stroke-linecap="round"/>
<line x1="285.6" y1="370.8" x2="296.6" y2="362.2" stroke="#f0882c" stroke-width="1.15" stroke-linecap="round"/>
<line x1="296.6" y1="362.2" x2="305.9" y2="362.2" stroke="#f0882c" stroke-width="1.15" stroke-linecap="round"/>
<line x1="305.9" y1="362.2" x2="312.2" y2="368.5" stroke="#f0882c" stroke-width="1.15" stroke-linecap="round"/>
<line x1="312.2" y1="368.5" x2="316.1" y2="369.2" stroke="#f0882c" stroke-width="1.15" stroke-linecap="round"/>
<line x1="316.1" y1="369.2" x2="321.6" y2="355.2" stroke="#f0882c" stroke-width="1.15" stroke-linecap="round"/>
<line x1="321.6" y1="355.2" x2="326.2" y2="345.0" stroke="#c030d0" stroke-width="1.15" stroke-linecap="round"/>
<line x1="326.2" y1="345.0" x2="330.2" y2="343.5" stroke="#c030d0" stroke-width="1.15" stroke-linecap="round"/>
<line x1="330.2" y1="343.5" x2="333.3" y2="346.6" stroke="#c030d0" stroke-width="1.15" stroke-linecap="round"/>
<line x1="333.3" y1="346.6" x2="335.6" y2="348.9" stroke="#c030d0" stroke-width="1.15" stroke-linecap="round"/>
<line x1="335.6" y1="348.9" x2="340.3" y2="348.2" stroke="#f0882c" stroke-width="1.15" stroke-linecap="round"/>
<line x1="340.3" y1="348.2" x2="345.8" y2="357.5" stroke="#f0882c" stroke-width="1.15" stroke-linecap="round"/>
<line x1="345.8" y1="357.5" x2="351.2" y2="357.5" stroke="#f0882c" stroke-width="1.15" stroke-linecap="round"/>
<line x1="351.2" y1="357.5" x2="360.6" y2="361.4" stroke="#f0882c" stroke-width="1.15" stroke-linecap="round"/>
<line x1="360.6" y1="361.4" x2="366.9" y2="360.7" stroke="#f0882c" stroke-width="1.15" stroke-linecap="round"/>
<line x1="366.9" y1="360.7" x2="373.1" y2="361.4" stroke="#f0882c" stroke-width="1.15" stroke-linecap="round"/>
<line x1="373.1" y1="361.4" x2="379.4" y2="369.2" stroke="#f0882c" stroke-width="1.15" stroke-linecap="round"/>
<line x1="379.4" y1="369.2" x2="388.8" y2="368.5" stroke="#f0882c" stroke-width="1.15" stroke-linecap="round"/>
<line x1="388.8" y1="368.5" x2="395.0" y2="370.8" stroke="#f0882c" stroke-width="1.15" stroke-linecap="round"/>
<line x1="395.0" y1="370.8" x2="399.4" y2="373.2" stroke="#f0882c" stroke-width="1.15" stroke-linecap="round"/>
<line x1="399.4" y1="373.2" x2="404.8" y2="369.2" stroke="#f0882c" stroke-width="1.15" stroke-linecap="round"/>
<line x1="404.8" y1="369.2" x2="408.8" y2="377.0" stroke="#f0882c" stroke-width="1.15" stroke-linecap="round"/>
<line x1="408.8" y1="377.0" x2="415.0" y2="383.6" stroke="#f0882c" stroke-width="1.15" stroke-linecap="round"/>
<line x1="415.0" y1="383.6" x2="418.1" y2="384.9" stroke="#38c0c8" stroke-width="1.15" stroke-linecap="round"/>
<line x1="418.1" y1="384.9" x2="425.9" y2="386.4" stroke="#28c028" stroke-width="1.15" stroke-linecap="round"/>
<line x1="425.9" y1="386.4" x2="430.6" y2="386.4" stroke="#28c028" stroke-width="1.15" stroke-linecap="round"/>
<line x1="430.6" y1="386.4" x2="433.8" y2="384.9" stroke="#28c028" stroke-width="1.15" stroke-linecap="round"/>
<line x1="433.8" y1="384.9" x2="435.3" y2="383.3" stroke="#38c0c8" stroke-width="1.15" stroke-linecap="round"/>
<line x1="435.3" y1="383.3" x2="439.2" y2="379.9" stroke="#f0882c" stroke-width="1.15" stroke-linecap="round"/>
<line x1="439.2" y1="379.9" x2="442.3" y2="386.8" stroke="#f0882c" stroke-width="1.15" stroke-linecap="round"/>
<line x1="442.3" y1="386.8" x2="450.9" y2="386.4" stroke="#28c028" stroke-width="1.15" stroke-linecap="round"/>
<line x1="450.9" y1="386.4" x2="455.6" y2="384.9" stroke="#28c028" stroke-width="1.15" stroke-linecap="round"/>
<line x1="455.6" y1="384.9" x2="458.8" y2="384.9" stroke="#38c0c8" stroke-width="1.15" stroke-linecap="round"/>
<line x1="458.8" y1="384.9" x2="461.9" y2="389.6" stroke="#28c028" stroke-width="1.15" stroke-linecap="round"/>
<line x1="461.9" y1="389.6" x2="467.3" y2="386.4" stroke="#28c028" stroke-width="1.15" stroke-linecap="round"/>
<line x1="467.3" y1="386.4" x2="475.9" y2="391.9" stroke="#28c028" stroke-width="1.15" stroke-linecap="round"/>
<line x1="475.9" y1="391.9" x2="481.4" y2="385.7" stroke="#28c028" stroke-width="1.15" stroke-linecap="round"/>
<line x1="481.4" y1="385.7" x2="485.3" y2="382.5" stroke="#38c0c8" stroke-width="1.15" stroke-linecap="round"/>
<line x1="485.3" y1="382.5" x2="491.6" y2="383.3" stroke="#f0882c" stroke-width="1.15" stroke-linecap="round"/>
<line x1="491.6" y1="383.3" x2="497.8" y2="384.9" stroke="#38c0c8" stroke-width="1.15" stroke-linecap="round"/>
<line x1="497.8" y1="384.9" x2="504.0" y2="391.9" stroke="#28c028" stroke-width="1.15" stroke-linecap="round"/>
<line x1="504.0" y1="391.9" x2="511.9" y2="392.7" stroke="#28c028" stroke-width="1.15" stroke-linecap="round"/>
<line x1="511.9" y1="392.7" x2="525.9" y2="392.7" stroke="#28c028" stroke-width="1.15" stroke-linecap="round"/>
<line x1="525.9" y1="392.7" x2="531.4" y2="387.2" stroke="#28c028" stroke-width="1.15" stroke-linecap="round"/>
<line x1="531.4" y1="387.2" x2="536.9" y2="384.9" stroke="#28c028" stroke-width="1.15" stroke-linecap="round"/>
<line x1="536.9" y1="384.9" x2="544.7" y2="386.4" stroke="#28c028" stroke-width="1.15" stroke-linecap="round"/>
<line x1="544.7" y1="386.4" x2="547.0" y2="387.2" stroke="#28c028" stroke-width="1.15" stroke-linecap="round"/>
<line x1="547.0" y1="387.2" x2="550.2" y2="380.2" stroke="#f0882c" stroke-width="1.15" stroke-linecap="round"/>
<line x1="550.2" y1="380.2" x2="555.6" y2="383.3" stroke="#f0882c" stroke-width="1.15" stroke-linecap="round"/>
<line x1="555.6" y1="383.3" x2="558.8" y2="386.4" stroke="#38c0c8" stroke-width="1.15" stroke-linecap="round"/>
<line x1="558.8" y1="386.4" x2="569.4" y2="393.0" stroke="#28c028" stroke-width="1.15" stroke-linecap="round"/>
<line x1="569.4" y1="393.0" x2="574.8" y2="393.0" stroke="#28c028" stroke-width="1.15" stroke-linecap="round"/>
<line x1="574.8" y1="393.0" x2="580.3" y2="382.5" stroke="#28c028" stroke-width="1.15" stroke-linecap="round"/>
<line x1="580.3" y1="382.5" x2="583.4" y2="384.9" stroke="#f0882c" stroke-width="1.15" stroke-linecap="round"/>
<line x1="583.4" y1="384.9" x2="588.9" y2="388.8" stroke="#28c028" stroke-width="1.15" stroke-linecap="round"/>
<line x1="588.9" y1="388.8" x2="597.5" y2="391.9" stroke="#28c028" stroke-width="1.15" stroke-linecap="round"/>
<line x1="597.5" y1="391.9" x2="604.5" y2="392.4" stroke="#28c028" stroke-width="1.15" stroke-linecap="round"/>
<line x1="604.5" y1="392.4" x2="610.0" y2="387.2" stroke="#28c028" stroke-width="1.15" stroke-linecap="round"/>
<line x1="610.0" y1="387.2" x2="619.4" y2="387.2" stroke="#28c028" stroke-width="1.15" stroke-linecap="round"/>
<line x1="619.4" y1="387.2" x2="622.5" y2="384.9" stroke="#28c028" stroke-width="1.15" stroke-linecap="round"/>
<line x1="622.5" y1="384.9" x2="625.6" y2="383.3" stroke="#38c0c8" stroke-width="1.15" stroke-linecap="round"/>
<line x1="625.6" y1="383.3" x2="628.8" y2="384.9" stroke="#38c0c8" stroke-width="1.15" stroke-linecap="round"/>
<line x1="628.8" y1="384.9" x2="635.0" y2="384.9" stroke="#38c0c8" stroke-width="1.15" stroke-linecap="round"/>
<line x1="635.0" y1="384.9" x2="638.1" y2="379.4" stroke="#f0882c" stroke-width="1.15" stroke-linecap="round"/>
<line x1="638.1" y1="379.4" x2="643.6" y2="382.5" stroke="#f0882c" stroke-width="1.15" stroke-linecap="round"/>
<line x1="643.6" y1="382.5" x2="650.6" y2="382.5" stroke="#f0882c" stroke-width="1.15" stroke-linecap="round"/>
<line x1="650.6" y1="382.5" x2="655.3" y2="383.3" stroke="#f0882c" stroke-width="1.15" stroke-linecap="round"/>
<line x1="655.3" y1="383.3" x2="661.6" y2="383.3" stroke="#f0882c" stroke-width="1.15" stroke-linecap="round"/>
<line x1="661.6" y1="383.3" x2="664.7" y2="382.1" stroke="#f0882c" stroke-width="1.15" stroke-linecap="round"/>
<line x1="664.7" y1="382.1" x2="669.4" y2="384.1" stroke="#f0882c" stroke-width="1.15" stroke-linecap="round"/>
<line x1="669.4" y1="384.1" x2="674.0" y2="386.4" stroke="#38c0c8" stroke-width="1.15" stroke-linecap="round"/>
<line x1="674.0" y1="386.4" x2="678.8" y2="386.8" stroke="#28c028" stroke-width="1.15" stroke-linecap="round"/>
<line x1="678.8" y1="386.8" x2="683.4" y2="391.9" stroke="#28c028" stroke-width="1.15" stroke-linecap="round"/>
<line x1="683.4" y1="391.9" x2="688.1" y2="388.8" stroke="#28c028" stroke-width="1.15" stroke-linecap="round"/>
<line x1="688.1" y1="388.8" x2="692.8" y2="388.0" stroke="#28c028" stroke-width="1.15" stroke-linecap="round"/>
<line x1="692.8" y1="388.0" x2="697.5" y2="385.7" stroke="#28c028" stroke-width="1.15" stroke-linecap="round"/>
<line x1="697.5" y1="385.7" x2="703.8" y2="384.9" stroke="#38c0c8" stroke-width="1.15" stroke-linecap="round"/>
<line x1="703.8" y1="384.9" x2="707.7" y2="387.7" stroke="#28c028" stroke-width="1.15" stroke-linecap="round"/>
<line x1="707.7" y1="387.7" x2="712.3" y2="376.3" stroke="#f0882c" stroke-width="1.15" stroke-linecap="round"/>
<line x1="712.3" y1="376.3" x2="716.2" y2="376.3" stroke="#f0882c" stroke-width="1.15" stroke-linecap="round"/>
<line x1="716.2" y1="376.3" x2="722.5" y2="380.9" stroke="#f0882c" stroke-width="1.15" stroke-linecap="round"/>
<line x1="722.5" y1="380.9" x2="728.8" y2="383.3" stroke="#f0882c" stroke-width="1.15" stroke-linecap="round"/>
<line x1="728.8" y1="383.3" x2="731.9" y2="383.6" stroke="#f0882c" stroke-width="1.15" stroke-linecap="round"/>
<line x1="731.9" y1="383.6" x2="737.0" y2="378.3" stroke="#f0882c" stroke-width="1.15" stroke-linecap="round"/>
<line x1="737.0" y1="378.3" x2="740.9" y2="380.2" stroke="#f0882c" stroke-width="1.15" stroke-linecap="round"/>
<line x1="740.9" y1="380.2" x2="745.6" y2="380.2" stroke="#f0882c" stroke-width="1.15" stroke-linecap="round"/>
<line x1="745.6" y1="380.2" x2="751.1" y2="377.8" stroke="#f0882c" stroke-width="1.15" stroke-linecap="round"/>
<line x1="751.1" y1="377.8" x2="756.6" y2="366.1" stroke="#f0882c" stroke-width="1.15" stroke-linecap="round"/>
<line x1="756.6" y1="366.1" x2="762.0" y2="374.7" stroke="#f0882c" stroke-width="1.15" stroke-linecap="round"/>
<line x1="762.0" y1="374.7" x2="766.7" y2="355.2" stroke="#f0882c" stroke-width="1.15" stroke-linecap="round"/>
<line x1="766.7" y1="355.2" x2="771.4" y2="357.5" stroke="#f0882c" stroke-width="1.15" stroke-linecap="round"/>
<line x1="771.4" y1="357.5" x2="776.1" y2="363.0" stroke="#f0882c" stroke-width="1.15" stroke-linecap="round"/>
<line x1="776.1" y1="363.0" x2="780.8" y2="365.3" stroke="#f0882c" stroke-width="1.15" stroke-linecap="round"/>
<line x1="780.8" y1="365.3" x2="784.7" y2="364.2" stroke="#f0882c" stroke-width="1.15" stroke-linecap="round"/>
<line x1="784.7" y1="364.2" x2="790.2" y2="366.4" stroke="#f0882c" stroke-width="1.15" stroke-linecap="round"/>
<line x1="790.2" y1="366.4" x2="795.6" y2="357.5" stroke="#f0882c" stroke-width="1.15" stroke-linecap="round"/>
<line x1="795.6" y1="357.5" x2="799.5" y2="358.3" stroke="#f0882c" stroke-width="1.15" stroke-linecap="round"/>
<line x1="799.5" y1="358.3" x2="805.8" y2="358.3" stroke="#f0882c" stroke-width="1.15" stroke-linecap="round"/>
<line x1="805.8" y1="358.3" x2="809.7" y2="356.4" stroke="#f0882c" stroke-width="1.15" stroke-linecap="round"/>
<line x1="809.7" y1="356.4" x2="814.4" y2="355.2" stroke="#f0882c" stroke-width="1.15" stroke-linecap="round"/>
<line x1="814.4" y1="355.2" x2="819.8" y2="365.8" stroke="#f0882c" stroke-width="1.15" stroke-linecap="round"/>
<line x1="819.8" y1="365.8" x2="823.8" y2="357.5" stroke="#f0882c" stroke-width="1.15" stroke-linecap="round"/>
<line x1="823.8" y1="357.5" x2="829.2" y2="353.9" stroke="#f0882c" stroke-width="1.15" stroke-linecap="round"/>
<line x1="829.2" y1="353.9" x2="834.7" y2="358.6" stroke="#f0882c" stroke-width="1.15" stroke-linecap="round"/>
<line x1="834.7" y1="358.6" x2="839.4" y2="358.3" stroke="#f0882c" stroke-width="1.15" stroke-linecap="round"/>
<line x1="839.4" y1="358.3" x2="844.8" y2="353.3" stroke="#f0882c" stroke-width="1.15" stroke-linecap="round"/>
<line x1="844.8" y1="353.3" x2="849.5" y2="360.7" stroke="#f0882c" stroke-width="1.15" stroke-linecap="round"/>
<line x1="849.5" y1="360.7" x2="855.0" y2="357.1" stroke="#f0882c" stroke-width="1.15" stroke-linecap="round"/>
<line x1="855.0" y1="357.1" x2="858.9" y2="358.6" stroke="#f0882c" stroke-width="1.15" stroke-linecap="round"/>
<line x1="858.9" y1="358.6" x2="863.6" y2="355.5" stroke="#f0882c" stroke-width="1.15" stroke-linecap="round"/>
<line x1="863.6" y1="355.5" x2="867.5" y2="353.3" stroke="#f0882c" stroke-width="1.15" stroke-linecap="round"/>
<rect x="11.5" y="36.5" width="871.0" height="239.0" fill="none" stroke="#aab8c6"/>
<rect x="11.5" y="281.5" width="871.0" height="53.0" fill="none" stroke="#aab8c6"/>
<rect x="11.5" y="340.5" width="871.0" height="56.0" fill="none" stroke="#aab8c6"/>
<line x1="42.5" y1="393" x2="42.5" y2="400" stroke="#aab8c6"/>
<line x1="71.5" y1="393" x2="71.5" y2="400" stroke="#aab8c6"/>
<line x1="101.5" y1="393" x2="101.5" y2="400" stroke="#aab8c6"/>
<line x1="130.5" y1="393" x2="130.5" y2="400" stroke="#aab8c6"/>
<line x1="159.5" y1="393" x2="159.5" y2="400" stroke="#aab8c6"/>
<line x1="189.5" y1="393" x2="189.5" y2="400" stroke="#aab8c6"/>
<line x1="218.5" y1="393" x2="218.5" y2="400" stroke="#aab8c6"/>
<line x1="247.5" y1="393" x2="247.5" y2="400" stroke="#aab8c6"/>
<line x1="277.5" y1="393" x2="277.5" y2="400" stroke="#aab8c6"/>
<line x1="306.5" y1="393" x2="306.5" y2="400" stroke="#aab8c6"/>
<line x1="335.5" y1="393" x2="335.5" y2="400" stroke="#aab8c6"/>
<line x1="365.5" y1="393" x2="365.5" y2="400" stroke="#aab8c6"/>
<line x1="394.5" y1="393" x2="394.5" y2="400" stroke="#aab8c6"/>
<line x1="423.5" y1="393" x2="423.5" y2="400" stroke="#aab8c6"/>
<line x1="453.5" y1="393" x2="453.5" y2="400" stroke="#aab8c6"/>
<line x1="482.5" y1="393" x2="482.5" y2="400" stroke="#aab8c6"/>
<line x1="511.5" y1="393" x2="511.5" y2="400" stroke="#aab8c6"/>
<line x1="541.5" y1="393" x2="541.5" y2="400" stroke="#aab8c6"/>
<line x1="570.5" y1="393" x2="570.5" y2="400" stroke="#aab8c6"/>
<line x1="599.5" y1="393" x2="599.5" y2="400" stroke="#aab8c6"/>
<line x1="629.5" y1="393" x2="629.5" y2="400" stroke="#aab8c6"/>
<line x1="658.5" y1="393" x2="658.5" y2="400" stroke="#aab8c6"/>
<line x1="687.5" y1="393" x2="687.5" y2="400" stroke="#aab8c6"/>
<line x1="717.5" y1="393" x2="717.5" y2="400" stroke="#aab8c6"/>
<line x1="746.5" y1="393" x2="746.5" y2="400" stroke="#aab8c6"/>
<line x1="775.5" y1="393" x2="775.5" y2="400" stroke="#aab8c6"/>
<line x1="804.5" y1="393" x2="804.5" y2="400" stroke="#aab8c6"/>
<line x1="834.5" y1="393" x2="834.5" y2="400" stroke="#aab8c6"/>
<line x1="863.5" y1="393" x2="863.5" y2="400" stroke="#aab8c6"/>
<text x="42.3" y="419" text-anchor="middle" fill="#f4f4f4" font-size="11.5" letter-spacing="0.15" stroke="#f4f4f4" stroke-width="0.25">20</text>
<text x="71.3" y="419" text-anchor="middle" fill="#f4f4f4" font-size="11.5" letter-spacing="0.15" stroke="#f4f4f4" stroke-width="0.25">21</text>
<text x="101.3" y="419" text-anchor="middle" fill="#f4f4f4" font-size="11.5" letter-spacing="0.15" stroke="#f4f4f4" stroke-width="0.25">22</text>
<text x="130.3" y="419" text-anchor="middle" fill="#f4f4f4" font-size="11.5" letter-spacing="0.15" stroke="#f4f4f4" stroke-width="0.25">23</text>
<text x="159.3" y="419" text-anchor="middle" fill="#f4f4f4" font-size="11.5" letter-spacing="0.15" stroke="#f4f4f4" stroke-width="0.25">24</text>
<text x="189.3" y="419" text-anchor="middle" fill="#f4f4f4" font-size="11.5" letter-spacing="0.15" stroke="#f4f4f4" stroke-width="0.25">27</text>
<text x="218.3" y="419" text-anchor="middle" fill="#f4f4f4" font-size="11.5" letter-spacing="0.15" stroke="#f4f4f4" stroke-width="0.25">28</text>
<text x="247.3" y="419" text-anchor="middle" fill="#f4f4f4" font-size="11.5" letter-spacing="0.15" stroke="#f4f4f4" stroke-width="0.25">29</text>
<text x="277.3" y="419" text-anchor="middle" fill="#f4f4f4" font-size="11.5" letter-spacing="0.15" stroke="#f4f4f4" stroke-width="0.25">30</text>
<text x="306.3" y="419" text-anchor="middle" fill="#f4f4f4" font-size="11.5" letter-spacing="0.15" stroke="#f4f4f4" stroke-width="0.25">31</text>
<text x="335.3" y="419" text-anchor="middle" fill="#f4f4f4" font-size="11.5" letter-spacing="0.15" stroke="#f4f4f4" stroke-width="0.25">3</text>
<text x="365.3" y="419" text-anchor="middle" fill="#f4f4f4" font-size="11.5" letter-spacing="0.15" stroke="#f4f4f4" stroke-width="0.25">4</text>
<text x="394.3" y="419" text-anchor="middle" fill="#f4f4f4" font-size="11.5" letter-spacing="0.15" stroke="#f4f4f4" stroke-width="0.25">5</text>
<text x="423.3" y="419" text-anchor="middle" fill="#f4f4f4" font-size="11.5" letter-spacing="0.15" stroke="#f4f4f4" stroke-width="0.25">6</text>
<text x="453.3" y="419" text-anchor="middle" fill="#f4f4f4" font-size="11.5" letter-spacing="0.15" stroke="#f4f4f4" stroke-width="0.25">7</text>
<text x="482.3" y="419" text-anchor="middle" fill="#f4f4f4" font-size="11.5" letter-spacing="0.15" stroke="#f4f4f4" stroke-width="0.25">10</text>
<text x="511.3" y="419" text-anchor="middle" fill="#f4f4f4" font-size="11.5" letter-spacing="0.15" stroke="#f4f4f4" stroke-width="0.25">11</text>
<text x="541.3" y="419" text-anchor="middle" fill="#f4f4f4" font-size="11.5" letter-spacing="0.15" stroke="#f4f4f4" stroke-width="0.25">12</text>
<text x="570.3" y="419" text-anchor="middle" fill="#f4f4f4" font-size="11.5" letter-spacing="0.15" stroke="#f4f4f4" stroke-width="0.25">13</text>
<text x="599.3" y="419" text-anchor="middle" fill="#f4f4f4" font-size="11.5" letter-spacing="0.15" stroke="#f4f4f4" stroke-width="0.25">14</text>
<text x="629.3" y="419" text-anchor="middle" fill="#f4f4f4" font-size="11.5" letter-spacing="0.15" stroke="#f4f4f4" stroke-width="0.25">17</text>
<text x="658.3" y="419" text-anchor="middle" fill="#f4f4f4" font-size="11.5" letter-spacing="0.15" stroke="#f4f4f4" stroke-width="0.25">18</text>
<text x="687.3" y="419" text-anchor="middle" fill="#f4f4f4" font-size="11.5" letter-spacing="0.15" stroke="#f4f4f4" stroke-width="0.25">19</text>
<text x="717.3" y="419" text-anchor="middle" fill="#f4f4f4" font-size="11.5" letter-spacing="0.15" stroke="#f4f4f4" stroke-width="0.25">20</text>
<text x="746.3" y="419" text-anchor="middle" fill="#f4f4f4" font-size="11.5" letter-spacing="0.15" stroke="#f4f4f4" stroke-width="0.25">21</text>
<text x="775.3" y="419" text-anchor="middle" fill="#f4f4f4" font-size="11.5" letter-spacing="0.15" stroke="#f4f4f4" stroke-width="0.25">24</text>
<text x="804.3" y="419" text-anchor="middle" fill="#f4f4f4" font-size="11.5" letter-spacing="0.15" stroke="#f4f4f4" stroke-width="0.25">25</text>
<text x="834.3" y="419" text-anchor="middle" fill="#f4f4f4" font-size="11.5" letter-spacing="0.15" stroke="#f4f4f4" stroke-width="0.25">26</text>
<text x="863.3" y="419" text-anchor="middle" fill="#f4f4f4" font-size="11.5" letter-spacing="0.15" stroke="#f4f4f4" stroke-width="0.25">27</text>
<text x="890" y="49.5" fill="#f4f4f4" font-size="11" stroke="#f4f4f4" stroke-width="0.2">1.1150</text>
<text x="890" y="79.5" fill="#f4f4f4" font-size="11" stroke="#f4f4f4" stroke-width="0.2">1.1100</text>
<text x="890" y="108.5" fill="#f4f4f4" font-size="11" stroke="#f4f4f4" stroke-width="0.2">1.1050</text>
<text x="890" y="138.5" fill="#f4f4f4" font-size="11" stroke="#f4f4f4" stroke-width="0.2">1.1000</text>
<text x="890" y="167.5" fill="#f4f4f4" font-size="11" stroke="#f4f4f4" stroke-width="0.2">1.0950</text>
<text x="890" y="226.5" fill="#f4f4f4" font-size="11" stroke="#f4f4f4" stroke-width="0.2">1.0850</text>
<text x="890" y="255.5" fill="#f4f4f4" font-size="11" stroke="#f4f4f4" stroke-width="0.2">1.0800</text>
<text x="890" y="316.5" fill="#f4f4f4" font-size="11" stroke="#f4f4f4" stroke-width="0.2">-0.00</text>
<text x="890" y="372.5" fill="#f4f4f4" font-size="11" stroke="#f4f4f4" stroke-width="0.2">50</text>
<rect x="883" y="178" width="47" height="21" fill="#ffffff"/>
<text x="891" y="192" fill="#404448" font-size="11">1.0903</text>
<text x="12" y="48.3" fill="#2424ee" font-size="11" textLength="135" lengthAdjust="spacingAndGlyphs">Exponential_Moving_Average</text>
<text x="151" y="48.3" fill="#ee1c2c" font-size="11" textLength="135" lengthAdjust="spacingAndGlyphs">Exponential_Moving_Average</text>
<rect x="11" y="36" width="31" height="21" fill="#f0f0f0"/>
<rect x="11" y="36" width="31" height="5" fill="#d4d4d4"/>
<defs><linearGradient id="gr" x1="0" y1="0" x2="0" y2="1"><stop offset="0" stop-color="#f4606a"/><stop offset="1" stop-color="#d41c28"/></linearGradient><linearGradient id="gb" x1="0" y1="0" x2="0" y2="1"><stop offset="0" stop-color="#48c0f4"/><stop offset="1" stop-color="#1888d0"/></linearGradient></defs>
<rect x="15.5" y="44.5" width="9" height="9" rx="1.5" fill="url(#gr)" stroke="#a81822"/>
<rect x="28.5" y="44.5" width="9" height="9" rx="1.5" fill="url(#gb)" stroke="#1464a8"/>
<text x="13.5" y="293.5" fill="#d8203a" font-size="11" textLength="28.5" lengthAdjust="spacingAndGlyphs">MACD</text>
<text x="13" y="352" fill="#f08a30" font-size="10">RSI</text>
<path d="M12.5 373.5 H70 a3 3 0 0 1 3 3 V389 a3 3 0 0 1 -3 3 H12.5 Z" fill="#5d6a7a" stroke="#b0c0d0"/>
<text x="19" y="387" fill="#ffffff" font-size="11">Янв 2020</text>
<line x1="12.5" y1="373" x2="12.5" y2="400" stroke="#c8e4e8" stroke-width="2"/>
<path d="M335.5 373.5 H393 a3 3 0 0 1 3 3 V389 a3 3 0 0 1 -3 3 H335.5 Z" fill="#5d6a7a" stroke="#b0c0d0"/>
<text x="342" y="387" fill="#ffffff" font-size="11">Фев 2020</text>
<line x1="335.5" y1="373" x2="335.5" y2="400" stroke="#c8e4e8" stroke-width="2"/>
</svg>
</div>
</body></html>
